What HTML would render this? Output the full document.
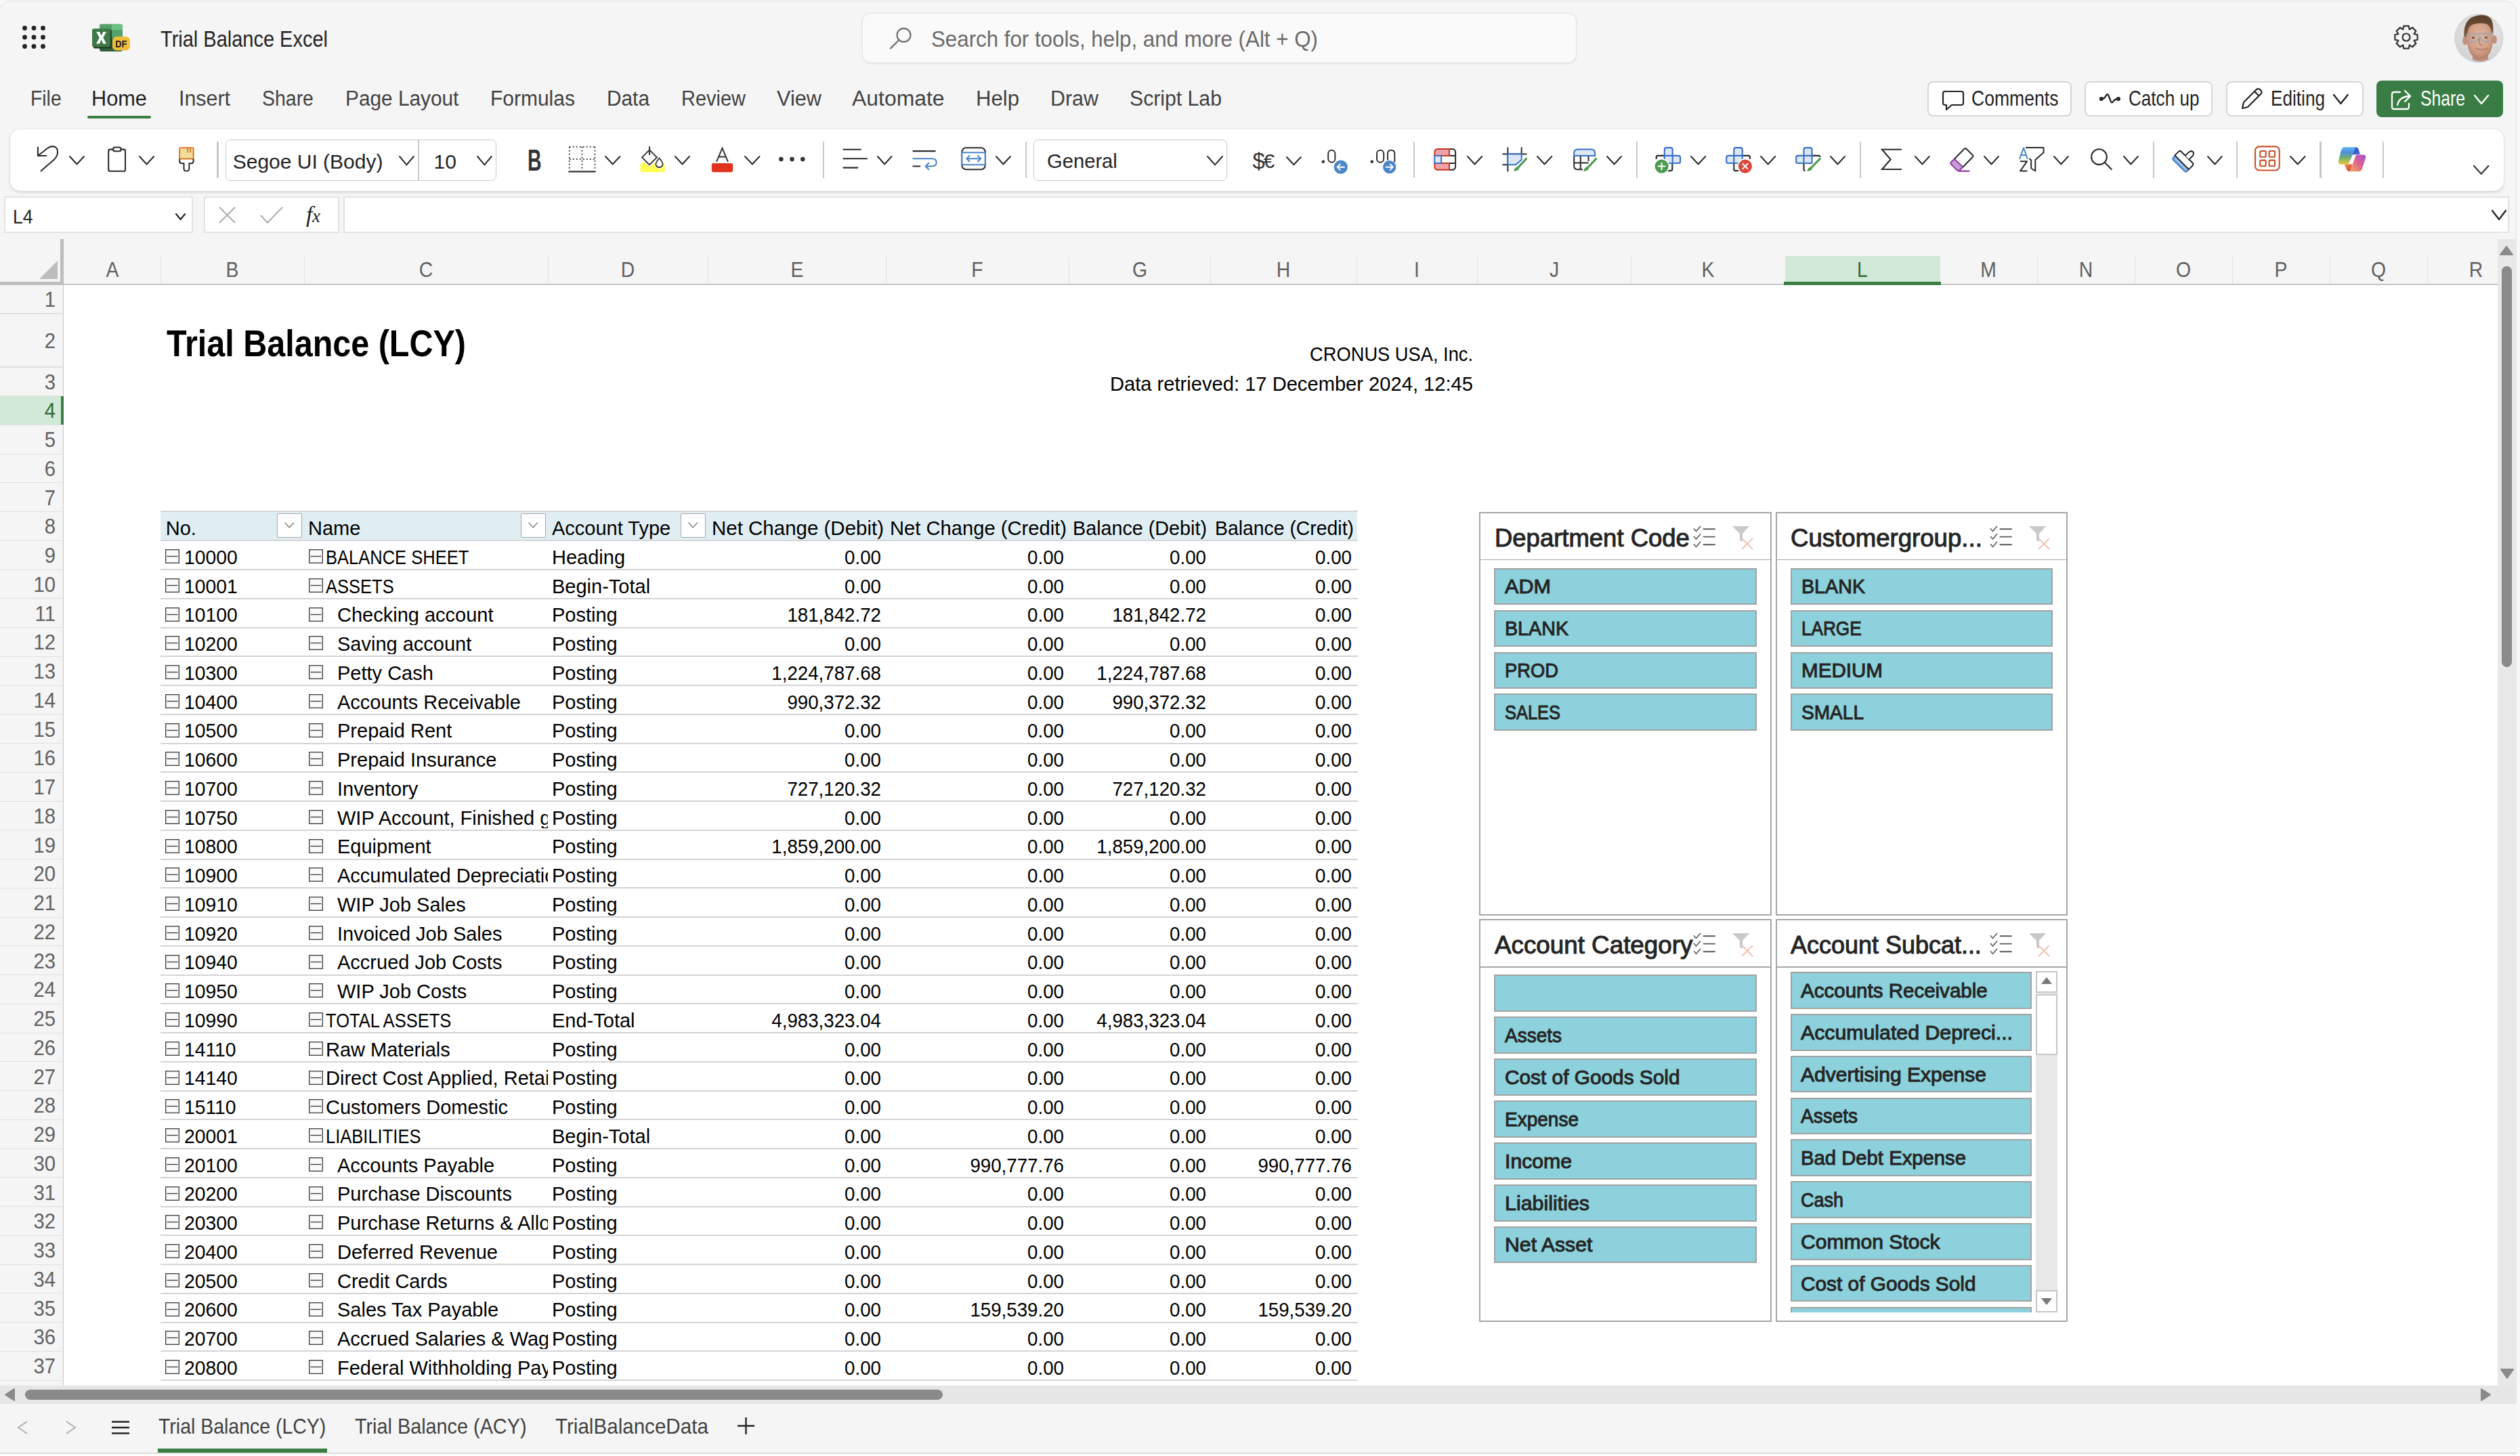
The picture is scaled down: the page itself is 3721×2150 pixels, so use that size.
<!DOCTYPE html><html><head><meta charset="utf-8"><style>
html,body{margin:0;padding:0;}
body{width:3721px;height:2150px;position:relative;overflow:hidden;background:#f5f5f5;font-family:"Liberation Sans",sans-serif;}
.t{position:absolute;white-space:nowrap;}
.r{position:absolute;}
svg.r{overflow:visible;}
</style></head><body>
<div class="r" style="left:0.00px;top:0.00px;width:3721.00px;height:2150.00px;background:#f8f8f8;"></div>
<div class="r" style="left:-2.50px;top:0.70px;width:3718.70px;height:2146.30px;background:#f5f5f5;border:1.5px solid #e2e2e2;border-radius:17px 17px 0 0;box-sizing:border-box;"></div>
<div class="r" style="left:0.00px;top:2147.00px;width:3721.00px;height:3.00px;background:#ffffff;"></div>
<svg class="r" style="left:33.00px;top:38.00px;" width="34" height="34" viewBox="0 0 34 34"><circle cx="3.5" cy="3.5" r="3.4" fill="#242424"/><circle cx="3.5" cy="17.0" r="3.4" fill="#242424"/><circle cx="3.5" cy="30.5" r="3.4" fill="#242424"/><circle cx="17.0" cy="3.5" r="3.4" fill="#242424"/><circle cx="17.0" cy="17.0" r="3.4" fill="#242424"/><circle cx="17.0" cy="30.5" r="3.4" fill="#242424"/><circle cx="30.5" cy="3.5" r="3.4" fill="#242424"/><circle cx="30.5" cy="17.0" r="3.4" fill="#242424"/><circle cx="30.5" cy="30.5" r="3.4" fill="#242424"/></svg>
<svg class="r" style="left:130.00px;top:30.00px;" width="70" height="52" viewBox="0 0 70 52"><g transform="translate(-130,-30)">
<path d="M147.1 38 Q147.1 35.7 149.4 35.7 H178.6 Q180.9 35.7 180.9 38 V73.6 Q180.9 75.9 178.6 75.9 H149.4 Q147.1 75.9 147.1 73.6 Z" fill="#2e5f3a"/>
<path d="M147.1 38 Q147.1 35.7 149.4 35.7 H164.8 V56.3 H147.1 Z" fill="#56a06a"/>
<path d="M164.8 35.7 H178.6 Q180.9 35.7 180.9 38 V44.8 H164.8 Z" fill="#6cc187"/>
<rect x="164.8" y="44.8" width="16.1" height="11.5" fill="#56a06a"/>
<rect x="137.5" y="43.5" width="27.3" height="27.9" rx="3" fill="#1c3a22"/>
<rect x="136" y="42.3" width="27" height="27" rx="3" fill="#3d7a47"/>
<path d="M142.2 47.1 H147 L149.6 52.7 L152.3 47.1 H157 L152.3 55.8 L157.1 64.5 H152.3 L149.6 58.8 L146.9 64.5 H142.1 L146.9 55.8 Z" fill="#ffffff"/>
<rect x="166" y="53.9" width="25.8" height="20.7" rx="6" fill="#f0bd38"/>
<text x="178.8" y="69.6" font-family="Liberation Sans" font-size="14.6" font-weight="700" fill="#1a1a28" text-anchor="middle" textLength="17" lengthAdjust="spacingAndGlyphs">DF</text>
</g></svg>
<div class="t" style="top:40.63px;font-size:33.52px;line-height:33.52px;color:#242424;left:237.00px;transform:scaleX(0.8647);transform-origin:0 0;">Trial Balance Excel</div>
<div class="r" style="left:1274.00px;top:20.00px;width:1053.00px;height:71.50px;background:#fafafa;border-radius:12px;box-shadow:0 0 0 1.5px #e6e6e6, 0 1.5px 3px rgba(0,0,0,0.10);"></div>
<svg class="r" style="left:1313.00px;top:40.00px;" width="36" height="34" viewBox="0 0 36 34"><circle cx="21.5" cy="11.8" r="10" fill="none" stroke="#707070" stroke-width="2.2"/><line x1="14.5" y1="19" x2="2" y2="31.5" stroke="#707070" stroke-width="2.4" stroke-linecap="round"/></svg>
<div class="t" style="top:40.86px;font-size:33.24px;line-height:33.24px;color:#6b6b6b;left:1375.00px;transform:scaleX(0.9408);transform-origin:0 0;">Search for tools, help, and more (Alt + Q)</div>
<svg class="r" style="left:3535.00px;top:37.00px;" width="36" height="36" viewBox="0 0 36 36"><g transform="translate(18,18)"><polygon points="16.59,-3.71 16.59,3.71 11.56,4.75 11.54,4.81 14.35,9.11 9.11,14.35 4.81,11.54 4.75,11.56 3.71,16.59 -3.71,16.59 -4.75,11.56 -4.81,11.54 -9.11,14.35 -14.35,9.11 -11.54,4.81 -11.56,4.75 -16.59,3.71 -16.59,-3.71 -11.56,-4.75 -11.54,-4.81 -14.35,-9.11 -9.11,-14.35 -4.81,-11.54 -4.75,-11.56 -3.71,-16.59 3.71,-16.59 4.75,-11.56 4.81,-11.54 9.11,-14.35 14.35,-9.11 11.54,-4.81 11.56,-4.75" fill="none" stroke="#333" stroke-width="2.2" stroke-linejoin="round"/><circle r="5.5" fill="none" stroke="#333" stroke-width="2.2"/></g></svg>
<svg class="r" style="left:3624.30px;top:19.80px;" width="72.6" height="72.6" viewBox="0 0 72.6 72.6">
<defs><clipPath id="av"><circle cx="36.3" cy="36.3" r="36.3"/></clipPath>
<radialGradient id="avbg" cx="0.55" cy="0.4" r="0.65"><stop offset="0" stop-color="#ececec"/><stop offset="1" stop-color="#d0d0d0"/></radialGradient>
<radialGradient id="skin" cx="0.5" cy="0.42" r="0.6"><stop offset="0" stop-color="#e3b8a2"/><stop offset="0.7" stop-color="#cf9a82"/><stop offset="1" stop-color="#b07a64"/></radialGradient>
<linearGradient id="hair" x1="0" y1="0" x2="0" y2="1"><stop offset="0" stop-color="#5a3c28"/><stop offset="1" stop-color="#7a5a44"/></linearGradient>
</defs>
<g clip-path="url(#av)">
<rect width="73" height="73" fill="url(#avbg)"/>
<path d="M20 66 Q38 74 58 64 L64 76 H14 Z" fill="#c9d3e2"/>
<path d="M27 58 Q38 70 50 58 L50 68 Q38 74 27 68 Z" fill="#c08e78"/>
<ellipse cx="15.8" cy="40" rx="3.6" ry="6.5" fill="#c48e78"/>
<ellipse cx="59.5" cy="38.5" rx="3.4" ry="6.2" fill="#c48e78"/>
<path d="M18 28 Q18 11 37 11 Q57 11 57.5 28 Q58.5 48 52 59 Q46 67.5 38 67.5 Q30 67.5 24.5 60 Q17.5 50 18 28 Z" fill="url(#skin)"/>
<path d="M14.5 34 Q13 14 25 6 Q36 0.5 47 3 Q56 6 57 16 Q58 22 57 29 L55.5 29 Q54 20 49 16 Q43 13.5 35 14.5 Q26 15 22 20 Q19.5 24 19 34 Z" fill="url(#hair)"/>
<path d="M19 30.5 L56.5 29.5 L56 33 Q55 41.5 47 41.5 Q39.5 41.5 38.5 34 L36.5 34 Q35.5 42 27.5 42 Q19.5 42 19 33 Z" fill="none" stroke="#a6a6a6" stroke-width="2.4" stroke-linejoin="round" opacity="0.9"/>
<ellipse cx="28" cy="35.8" rx="2.2" ry="1.3" fill="#4a4a50"/>
<ellipse cx="47" cy="35.5" rx="2.2" ry="1.3" fill="#4a4a50"/>
<path d="M37 37 Q36 44 38.5 46 Q40 46.5 41 45.5" fill="none" stroke="#a87262" stroke-width="1.3"/>
<path d="M31.5 51 Q40.5 57.5 50 51 Q41 55 31.5 51 Z" fill="#f2ead6" stroke="#b07064" stroke-width="1"/>
</g></svg>
<div class="t" style="top:129.92px;font-size:31.28px;line-height:31.28px;color:#424242;left:45.40px;transform:scaleX(0.9065);transform-origin:0 0;">File</div>
<div class="t" style="top:129.92px;font-size:31.28px;line-height:31.28px;color:#242424;left:135.00px;transform:scaleX(0.9826);transform-origin:0 0;">Home</div>
<div class="t" style="top:129.92px;font-size:31.28px;line-height:31.28px;color:#424242;left:264.00px;transform:scaleX(0.9713);transform-origin:0 0;">Insert</div>
<div class="t" style="top:129.92px;font-size:31.28px;line-height:31.28px;color:#424242;left:387.00px;transform:scaleX(0.9103);transform-origin:0 0;">Share</div>
<div class="t" style="top:129.92px;font-size:31.28px;line-height:31.28px;color:#424242;left:510.00px;transform:scaleX(0.9534);transform-origin:0 0;">Page Layout</div>
<div class="t" style="top:129.92px;font-size:31.28px;line-height:31.28px;color:#424242;left:724.00px;transform:scaleX(0.9587);transform-origin:0 0;">Formulas</div>
<div class="t" style="top:129.92px;font-size:31.28px;line-height:31.28px;color:#424242;left:896.00px;transform:scaleX(0.9533);transform-origin:0 0;">Data</div>
<div class="t" style="top:129.92px;font-size:31.28px;line-height:31.28px;color:#424242;left:1005.70px;transform:scaleX(0.9261);transform-origin:0 0;">Review</div>
<div class="t" style="top:129.92px;font-size:31.28px;line-height:31.28px;color:#424242;left:1146.70px;transform:scaleX(0.9814);transform-origin:0 0;">View</div>
<div class="t" style="top:129.92px;font-size:31.28px;line-height:31.28px;color:#424242;left:1258.00px;transform:scaleX(1.0208);transform-origin:0 0;">Automate</div>
<div class="t" style="top:129.92px;font-size:31.28px;line-height:31.28px;color:#424242;left:1441.00px;transform:scaleX(0.9946);transform-origin:0 0;">Help</div>
<div class="t" style="top:129.92px;font-size:31.28px;line-height:31.28px;color:#424242;left:1551.00px;transform:scaleX(0.9725);transform-origin:0 0;">Draw</div>
<div class="t" style="top:129.92px;font-size:31.28px;line-height:31.28px;color:#424242;left:1668.00px;transform:scaleX(0.9655);transform-origin:0 0;">Script Lab</div>
<div class="r" style="left:129.00px;top:170.80px;width:94.00px;height:4.40px;background:#3a7d44;border-radius:3px;"></div>
<div class="r" style="left:2845.60px;top:119.50px;width:213.40px;height:52.50px;background:#ffffff;border:2px solid #d6d6d6;border-radius:8px;box-sizing:border-box;"></div>
<div class="r" style="left:3077.80px;top:119.50px;width:189.70px;height:52.50px;background:#ffffff;border:2px solid #d6d6d6;border-radius:8px;box-sizing:border-box;"></div>
<div class="r" style="left:3287.00px;top:119.50px;width:203.00px;height:52.50px;background:#ffffff;border:2px solid #d6d6d6;border-radius:8px;box-sizing:border-box;"></div>
<div class="r" style="left:3508.70px;top:119.00px;width:187.30px;height:54.00px;background:#3a7d44;border-radius:8px;"></div>
<div class="t" style="top:130.99px;font-size:30.73px;line-height:30.73px;color:#242424;left:2911.00px;transform:scaleX(0.8650);transform-origin:0 0;">Comments</div>
<div class="t" style="top:130.99px;font-size:30.73px;line-height:30.73px;color:#242424;left:3143.00px;transform:scaleX(0.8497);transform-origin:0 0;">Catch up</div>
<div class="t" style="top:130.99px;font-size:30.73px;line-height:30.73px;color:#242424;left:3352.50px;transform:scaleX(0.8515);transform-origin:0 0;">Editing</div>
<div class="t" style="top:130.99px;font-size:30.73px;line-height:30.73px;color:#ffffff;left:3574.00px;transform:scaleX(0.8049);transform-origin:0 0;">Share</div>
<svg class="r" style="left:2867.00px;top:133.00px;" width="34" height="32" viewBox="0 0 34 32"><path d="M5 2 H29 Q32 2 32 5 V19 Q32 22 29 22 H15 L7 29 V22 H5 Q2 22 2 19 V5 Q2 2 5 2 Z" fill="none" stroke="#242424" stroke-width="2.2" stroke-linejoin="round"/></svg>
<svg class="r" style="left:3090.00px;top:130.00px;" width="50" height="30" viewBox="0 0 50 30"><g transform="translate(-3090,-130)"><path d="M3103 146 Q3107.5 146 3109.5 141.5 Q3111.6 137 3113.6 141.5 L3116.5 149 Q3118.4 153.5 3120.6 149.5 Q3123 145.8 3128 146" fill="none" stroke="#242424" stroke-width="2.3" stroke-linecap="round"/><circle cx="3102.9" cy="146" r="3" fill="#242424"/><circle cx="3128" cy="146" r="3" fill="#242424"/></g></svg>
<svg class="r" style="left:3307.00px;top:129.00px;" width="36" height="34" viewBox="0 0 36 34"><path d="M4 31 L6 22 L25 3 Q28 1 31 4 Q34 7 31 10 L12 29 Z M22 6 L28 12" fill="none" stroke="#242424" stroke-width="2.2" stroke-linejoin="round"/></svg>
<svg class="r" style="left:3443.00px;top:137.00px;" width="26.699999999999818" height="19" viewBox="0 0 26.699999999999818 19"><polyline points="3,3 13.3,16.0 23.7,3" fill="none" stroke="#242424" stroke-width="2.4" stroke-linecap="round" stroke-linejoin="round"/></svg>
<svg class="r" style="left:3529.00px;top:131.00px;" width="32" height="32" viewBox="0 0 32 32"><path d="M22 3 L30 11 L22 19 M30 11 Q14 11 11 24" fill="none" stroke="#fff" stroke-width="2.3" stroke-linejoin="round" stroke-linecap="round"/><path d="M15 5 H6 Q3 5 3 8 V27 Q3 30 6 30 H25 Q28 30 28 27 V22" fill="none" stroke="#fff" stroke-width="2.3" stroke-linecap="round"/></svg>
<svg class="r" style="left:3651.00px;top:138.00px;" width="26" height="18" viewBox="0 0 26 18"><polyline points="3,3 13.0,15.0 23.0,3" fill="none" stroke="#ffffff" stroke-width="2.4" stroke-linecap="round" stroke-linejoin="round"/></svg>
<div class="r" style="left:15.00px;top:191.00px;width:3682.00px;height:90.50px;background:#ffffff;border-radius:15px;box-shadow:0 1.5px 4px rgba(0,0,0,0.14), 0 0 1px rgba(0,0,0,0.10);"></div>
<svg class="r" style="left:50.00px;top:213.00px;" width="40" height="44" viewBox="0 0 40 44"><g transform="translate(-50,-213)" fill="none" stroke="#2b2b2b" stroke-width="2.1" stroke-linecap="round" stroke-linejoin="round"><path d="M56 230 L70 219 Q76 214.5 81.5 217 Q86.5 220.5 84.5 228.5 Q83.5 232 80 235.5 L60.5 252.5"/><path d="M56 217.5 V230 H68.3"/></g></svg>
<svg class="r" style="left:100.00px;top:227.80px;" width="27" height="17.5" viewBox="0 0 27 17.5"><polyline points="3,3 13.5,14.5 24.0,3" fill="none" stroke="#2b2b2b" stroke-width="2.0" stroke-linecap="round" stroke-linejoin="round"/></svg>
<svg class="r" style="left:155.00px;top:213.00px;" width="36" height="44" viewBox="0 0 36 44"><g transform="translate(-155,-213)" fill="none" stroke="#2b2b2b" stroke-width="2.1" stroke-linejoin="round"><rect x="160.2" y="220.6" width="24.8" height="32.2" rx="2.3"/><rect x="167" y="217.5" width="11.6" height="5.8" rx="2.9" fill="#fff"/></g></svg>
<svg class="r" style="left:202.70px;top:227.80px;" width="27.200000000000017" height="17.5" viewBox="0 0 27.200000000000017 17.5"><polyline points="3,3 13.6,14.5 24.2,3" fill="none" stroke="#2b2b2b" stroke-width="2.0" stroke-linecap="round" stroke-linejoin="round"/></svg>
<svg class="r" style="left:260.00px;top:213.00px;" width="32" height="44" viewBox="0 0 32 44"><g transform="translate(-260,-213)" stroke-linejoin="round"><rect x="265.2" y="218.3" width="20.4" height="16.3" rx="1.5" fill="#f3de9b" stroke="#d9782a" stroke-width="2"/><path d="M276.9 218.5 V225.5 M281 218.5 V225.5" stroke="#d9782a" stroke-width="1.8"/><path d="M265.2 234.6 V238 Q265.2 241.3 268.5 241.3 H271.5 V249 Q271.5 252.6 275.4 252.6 Q279.3 252.6 279.3 249 V241.3 H282.3 Q285.6 241.3 285.6 238 V234.6" fill="none" stroke="#2b2b2b" stroke-width="2"/></g></svg>
<div class="r" style="left:320.40px;top:209.20px;width:2.20px;height:53.80px;background:#c8c8c8;"></div>
<div class="r" style="left:332.50px;top:205.50px;width:400.80px;height:61.50px;background:#ffffff;border:1.6px solid #cbcbcb;border-radius:7px;box-sizing:border-box;"></div>
<div class="r" style="left:617.00px;top:206.00px;width:1.60px;height:60.50px;background:#cbcbcb;"></div>
<div class="t" style="top:223.80px;font-size:30.00px;line-height:30.00px;color:#242424;left:343.70px;">Segoe UI (Body)</div>
<svg class="r" style="left:587.00px;top:228.30px;" width="26.799999999999955" height="18.399999999999977" viewBox="0 0 26.799999999999955 18.399999999999977"><polyline points="3,3 13.4,15.4 23.8,3" fill="none" stroke="#2b2b2b" stroke-width="2.0" stroke-linecap="round" stroke-linejoin="round"/></svg>
<div class="t" style="top:223.80px;font-size:30.00px;line-height:30.00px;color:#242424;left:640.50px;">10</div>
<svg class="r" style="left:702.00px;top:228.30px;" width="26.799999999999955" height="18.399999999999977" viewBox="0 0 26.799999999999955 18.399999999999977"><polyline points="3,3 13.4,15.4 23.8,3" fill="none" stroke="#2b2b2b" stroke-width="2.0" stroke-linecap="round" stroke-linejoin="round"/></svg>
<div class="t" style="top:214.74px;font-size:44.13px;line-height:44.13px;color:#333333;font-weight:700;left:779.20px;transform:scaleX(0.6463);transform-origin:0 0;">B</div>
<svg class="r" style="left:836.00px;top:212.00px;" width="48" height="46" viewBox="0 0 48 46"><g transform="translate(-836,-212)"><line x1="840.8" y1="216.8" x2="878.6" y2="216.8" stroke="#444" stroke-width="1.9" stroke-dasharray="1.9 3.1"/><line x1="840.8" y1="235" x2="878.6" y2="235" stroke="#444" stroke-width="1.9" stroke-dasharray="1.9 3.1"/><line x1="840.8" y1="216.8" x2="840.8" y2="250" stroke="#444" stroke-width="1.9" stroke-dasharray="1.9 3.1"/><line x1="859.5" y1="216.8" x2="859.5" y2="250" stroke="#444" stroke-width="1.9" stroke-dasharray="1.9 3.1"/><line x1="878.4" y1="216.8" x2="878.4" y2="250" stroke="#444" stroke-width="1.9" stroke-dasharray="1.9 3.1"/><line x1="840.3" y1="253.4" x2="878.8" y2="253.4" stroke="#333" stroke-width="2.2" stroke-linecap="round"/></g></svg>
<svg class="r" style="left:890.80px;top:227.80px;" width="27.40000000000009" height="17.5" viewBox="0 0 27.40000000000009 17.5"><polyline points="3,3 13.7,14.5 24.4,3" fill="none" stroke="#2b2b2b" stroke-width="2.0" stroke-linecap="round" stroke-linejoin="round"/></svg>
<svg class="r" style="left:940.00px;top:212.00px;" width="46" height="46" viewBox="0 0 46 46"><g transform="translate(-940,-212)">
<path d="M945.5 244 Q945.5 240.6 949 240.6 H978 Q981.8 240.6 981.8 244 V251 Q981.8 254.3 978 254.3 H949 Q945.5 254.3 945.5 251 Z" fill="#ffff52"/>
<path d="M959 221.4 L970 232.4 L959 243.4 L948 232.4 Z" fill="#fff" stroke="#fff" stroke-width="5" stroke-linejoin="round"/>
<path d="M959 221.4 L970 232.4 L959 243.4 L948 232.4 Z" fill="none" stroke="#333" stroke-width="2" stroke-linejoin="round"/>
<line x1="959" y1="216.3" x2="959" y2="229" stroke="#333" stroke-width="2"/>
<path d="M973.5 233.5 Q967.5 240.5 968.5 243.5 Q969.5 247 973.5 247 Q977.5 247 978.5 243.5 Q979.5 240.5 973.5 233.5 Z" fill="#fff" stroke="#fff" stroke-width="4"/>
<path d="M973.5 233.5 Q967.5 240.5 968.5 243.5 Q969.5 247 973.5 247 Q977.5 247 978.5 243.5 Q979.5 240.5 973.5 233.5 Z" fill="none" stroke="#333" stroke-width="1.9"/>
</g></svg>
<svg class="r" style="left:993.80px;top:227.80px;" width="27.0" height="17.5" viewBox="0 0 27.0 17.5"><polyline points="3,3 13.5,14.5 24.0,3" fill="none" stroke="#2b2b2b" stroke-width="2.0" stroke-linecap="round" stroke-linejoin="round"/></svg>
<svg class="r" style="left:1046.00px;top:214.00px;" width="40" height="44" viewBox="0 0 40 44"><g transform="translate(-1046,-214)">
<path d="M1058 238.8 L1066.5 218.8 L1075 238.8 M1061 231.5 H1072" fill="none" stroke="#333" stroke-width="2"/>
<rect x="1050.8" y="241.1" width="31.4" height="13.2" rx="3" fill="#e0341f"/></g></svg>
<svg class="r" style="left:1096.50px;top:227.80px;" width="27.5" height="17.5" viewBox="0 0 27.5 17.5"><polyline points="3,3 13.8,14.5 24.5,3" fill="none" stroke="#2b2b2b" stroke-width="2.0" stroke-linecap="round" stroke-linejoin="round"/></svg>
<svg class="r" style="left:1148.00px;top:229.00px;" width="42" height="12" viewBox="0 0 42 12"><g transform="translate(-1148,-229)" fill="#333"><circle cx="1153.4" cy="235.1" r="3.3"/><circle cx="1169.5" cy="235.1" r="3.3"/><circle cx="1185.3" cy="235.1" r="3.3"/></g></svg>
<div class="r" style="left:1214.70px;top:209.20px;width:2.20px;height:53.80px;background:#c8c8c8;"></div>
<svg class="r" style="left:1240.00px;top:215.00px;" width="46" height="38" viewBox="0 0 46 38"><g transform="translate(-1240,-215)" stroke="#2b2b2b" stroke-width="2.1" stroke-linecap="round"><line x1="1245.4" y1="220.7" x2="1270.8" y2="220.7"/><line x1="1245.4" y1="234.2" x2="1280" y2="234.2"/><line x1="1245.4" y1="247.6" x2="1266.4" y2="247.6"/></g></svg>
<svg class="r" style="left:1293.20px;top:227.80px;" width="26.5" height="17.5" viewBox="0 0 26.5 17.5"><polyline points="3,3 13.2,14.5 23.5,3" fill="none" stroke="#2b2b2b" stroke-width="2.0" stroke-linecap="round" stroke-linejoin="round"/></svg>
<svg class="r" style="left:1343.00px;top:215.00px;" width="46" height="40" viewBox="0 0 46 40"><g transform="translate(-1343,-215)" fill="none" stroke-width="2.1" stroke-linecap="round" stroke-linejoin="round">
<line x1="1348.4" y1="223.1" x2="1380.7" y2="223.1" stroke="#2b2b2b"/>
<line x1="1348.4" y1="245.5" x2="1358.3" y2="245.5" stroke="#2b2b2b"/>
<path d="M1348.4 234.2 H1376 Q1382.7 234.2 1382.7 239.8 Q1382.7 245.5 1376 245.5 H1367 M1371.4 240.8 L1366.7 245.5 L1371.4 250.2" stroke="#4a86c8"/></g></svg>
<svg class="r" style="left:1415.00px;top:213.00px;" width="46" height="42" viewBox="0 0 46 42"><g transform="translate(-1415,-213)" fill="none" stroke-width="2.1" stroke-linecap="round" stroke-linejoin="round">
<rect x="1420.4" y="218.3" width="34.3" height="31.9" rx="6" stroke="#2b2b2b"/>
<rect x="1420.4" y="225.3" width="34.3" height="18" stroke="#4a86c8" fill="#fff"/>
<path d="M1427.5 234.2 H1448 M1431.5 230 L1427.3 234.2 L1431.5 238.4 M1444 230 L1448.2 234.2 L1444 238.4" stroke="#4a86c8"/></g></svg>
<svg class="r" style="left:1467.80px;top:227.80px;" width="26.90000000000009" height="17.5" viewBox="0 0 26.90000000000009 17.5"><polyline points="3,3 13.5,14.5 23.9,3" fill="none" stroke="#2b2b2b" stroke-width="2.0" stroke-linecap="round" stroke-linejoin="round"/></svg>
<div class="r" style="left:1513.90px;top:209.20px;width:2.20px;height:53.80px;background:#c8c8c8;"></div>
<div class="r" style="left:1526.00px;top:205.70px;width:286.00px;height:61.00px;background:#ffffff;border:1.6px solid #cbcbcb;border-radius:7px;box-sizing:border-box;"></div>
<div class="t" style="top:224.48px;font-size:29.20px;line-height:29.20px;color:#242424;left:1546.00px;">General</div>
<svg class="r" style="left:1780.00px;top:228.30px;" width="28" height="18.399999999999977" viewBox="0 0 28 18.399999999999977"><polyline points="3,3 14.0,15.4 25.0,3" fill="none" stroke="#2b2b2b" stroke-width="2.0" stroke-linecap="round" stroke-linejoin="round"/></svg>
<div class="t" style="top:220.57px;font-size:33.00px;line-height:33.00px;color:#333333;left:1849.50px;">$</div>
<div class="t" style="top:223.10px;font-size:30.00px;line-height:30.00px;color:#333333;left:1865.50px;">€</div>
<svg class="r" style="left:1897.20px;top:228.80px;" width="26.799999999999955" height="17.299999999999983" viewBox="0 0 26.799999999999955 17.299999999999983"><polyline points="3,3 13.4,14.3 23.8,3" fill="none" stroke="#2b2b2b" stroke-width="2.0" stroke-linecap="round" stroke-linejoin="round"/></svg>
<svg class="r" style="left:1948.00px;top:218.00px;" width="44" height="40" viewBox="0 0 44 40"><g transform="translate(-1948,-218)">
<circle cx="1953.8" cy="238.7" r="2.3" fill="#333"/>
<rect x="1961.2" y="221.8" width="10.2" height="18" rx="5.1" fill="none" stroke="#333" stroke-width="2"/>
<circle cx="1979.8" cy="246.7" r="10.1" fill="#4a86c8"/>
<path d="M1985 246.7 H1974.8 M1978.8 242.5 L1974.6 246.7 L1978.8 250.9" fill="none" stroke="#fff" stroke-width="1.9" stroke-linecap="round" stroke-linejoin="round"/></g></svg>
<svg class="r" style="left:2020.00px;top:218.00px;" width="46" height="40" viewBox="0 0 46 40"><g transform="translate(-2020,-218)">
<circle cx="2025.8" cy="238.7" r="2.3" fill="#333"/>
<rect x="2033" y="221.8" width="10.2" height="18" rx="5.1" fill="none" stroke="#333" stroke-width="2"/>
<path d="M2049 240 V227 Q2049 221.8 2054 221.8 Q2059.3 221.8 2059.3 227 V240" fill="none" stroke="#333" stroke-width="2"/>
<circle cx="2051.7" cy="246.7" r="10.1" fill="#4a86c8" stroke="#fff" stroke-width="1"/>
<path d="M2046.5 246.7 H2056.7 M2052.7 242.5 L2056.9 246.7 L2052.7 250.9" fill="none" stroke="#fff" stroke-width="1.9" stroke-linecap="round" stroke-linejoin="round"/></g></svg>
<div class="r" style="left:2086.60px;top:209.20px;width:2.20px;height:53.80px;background:#c8c8c8;"></div>
<svg class="r" style="left:2114.00px;top:216.00px;" width="40" height="40" viewBox="0 0 40 40"><g transform="translate(-2114,-216)" stroke-width="2">
<path d="M2140 220 H2144 Q2149.1 220 2149.1 225 V245.8 Q2149.1 250.8 2144 250.8 H2140" fill="none" stroke="#2b2b2b"/>
<line x1="2140" y1="229.9" x2="2149" y2="229.9" stroke="#2b2b2b"/><line x1="2140" y1="241" x2="2149" y2="241" stroke="#2b2b2b"/>
<path d="M2140 220 H2123.3 Q2118.3 220 2118.3 225 V229.9 H2140 Z" fill="#eea3a8" stroke="#c8361f"/>
<path d="M2140 250.8 H2123.3 Q2118.3 250.8 2118.3 245.8 V241 H2140 Z" fill="#eea3a8" stroke="#c8361f"/>
<rect x="2118.3" y="229.9" width="9.9" height="11.1" fill="#dce8f6" stroke="#3a6fc4"/>
</g></svg>
<svg class="r" style="left:2163.80px;top:227.80px;" width="27.199999999999818" height="17.5" viewBox="0 0 27.199999999999818 17.5"><polyline points="3,3 13.6,14.5 24.2,3" fill="none" stroke="#2b2b2b" stroke-width="2.0" stroke-linecap="round" stroke-linejoin="round"/></svg>
<svg class="r" style="left:2214.00px;top:213.00px;" width="46" height="44" viewBox="0 0 46 44"><g transform="translate(-2214,-213)" stroke-width="2">
<path d="M2218.5 227.5 H2254.5 M2218.5 243.2 H2226 M2226.4 217.4 V253.5 M2246.7 217.4 V227" fill="none" stroke="#2b2b2b"/>
<path d="M2226.4 227.5 H2246.7 V236 L2238 243.2 H2226.4 Z" fill="#dce8f6" stroke="#3a6fc4"/>
<path d="M2253.5 234.5 L2241 248" stroke="#fff" stroke-width="6"/>
<path d="M2253.5 234.5 L2242 247" stroke="#4e9a51" stroke-width="3.2" stroke-linecap="round"/>
<path d="M2241.5 246 Q2236 247 2235.5 252.8 Q2241 253 2243 249 Z" fill="#4e9a51"/>
</g></svg>
<svg class="r" style="left:2266.90px;top:227.80px;" width="27.299999999999727" height="17.5" viewBox="0 0 27.299999999999727 17.5"><polyline points="3,3 13.6,14.5 24.3,3" fill="none" stroke="#2b2b2b" stroke-width="2.0" stroke-linecap="round" stroke-linejoin="round"/></svg>
<svg class="r" style="left:2320.00px;top:215.00px;" width="42" height="42" viewBox="0 0 42 42"><g transform="translate(-2320,-215)" stroke-width="2">
<path d="M2324.2 229.9 V245 Q2324.2 250.2 2329.4 250.2 H2337 M2333.8 229.9 V250 M2324.2 240.4 H2345.5 M2345.5 229.9 V238" fill="none" stroke="#2b2b2b"/>
<path d="M2324.2 229.9 V226 Q2324.2 220.5 2330 220.5 H2349.5 Q2355.1 220.5 2355.1 226 V229.9 Z" fill="#dce8f6" stroke="#3a6fc4"/>
<path d="M2356.7 234.5 L2344 248" stroke="#fff" stroke-width="6"/>
<path d="M2356.7 234.5 L2345 247" stroke="#4e9a51" stroke-width="3.2" stroke-linecap="round"/>
<path d="M2344.5 246 Q2339 247 2338.3 252.8 Q2344 253 2346 249 Z" fill="#4e9a51"/>
</g></svg>
<svg class="r" style="left:2370.00px;top:227.80px;" width="27" height="17.5" viewBox="0 0 27 17.5"><polyline points="3,3 13.5,14.5 24.0,3" fill="none" stroke="#2b2b2b" stroke-width="2.0" stroke-linecap="round" stroke-linejoin="round"/></svg>
<div class="r" style="left:2415.80px;top:209.20px;width:2.20px;height:53.80px;background:#c8c8c8;"></div>
<svg class="r" style="left:2440.00px;top:214.00px;" width="46" height="44" viewBox="0 0 46 44"><g transform="translate(-2440,-214)" stroke-width="2.1" stroke-linejoin="round">
<path d="M2445.7 235.1 V232 Q2445.7 229.9 2448 229.9 H2457.8 M2469.3 241 V250 Q2469.3 252.1 2467 252.1 H2455" fill="none" stroke="#2b2b2b"/>
<path d="M2457.8 229.9 V221 Q2457.8 218.1 2460.6 218.1 H2467 Q2469.7 218.1 2469.7 221 V229.9 H2478.3 Q2481.1 229.9 2481.1 232.7 V238.2 Q2481.1 241 2478.3 241 H2457.8 Z" fill="#dce8f6" stroke="#3a6fc4"/>
<path d="M2469.7 229.9 V241 M2457.8 229.9 H2469.7" fill="none" stroke="#3a6fc4"/>
<circle cx="2453.6" cy="245.6" r="10.8" fill="#4e9a51" stroke="#fff" stroke-width="1.5"/>
<path d="M2453.6 240 V251.2 M2448 245.6 H2459.2" stroke="#fff" stroke-width="2"/>
</g></svg>
<svg class="r" style="left:2493.80px;top:227.80px;" width="27.199999999999818" height="17.5" viewBox="0 0 27.199999999999818 17.5"><polyline points="3,3 13.6,14.5 24.2,3" fill="none" stroke="#2b2b2b" stroke-width="2.0" stroke-linecap="round" stroke-linejoin="round"/></svg>
<svg class="r" style="left:2544.00px;top:214.00px;" width="46" height="44" viewBox="0 0 46 44"><g transform="translate(-2544,-214)" stroke-width="2.1" stroke-linejoin="round">
<path d="M2572.7 229.9 H2581.5 Q2583.9 229.9 2583.9 232 V235 M2560.3 241 V250 Q2560.3 252.1 2562.5 252.1 H2567" fill="none" stroke="#2b2b2b"/>
<path d="M2560.3 229.9 V221 Q2560.3 218.1 2563 218.1 H2570 Q2572.7 218.1 2572.7 221 V241 H2552 Q2549.2 241 2549.2 238.2 V232.7 Q2549.2 229.9 2552 229.9 Z" fill="#dce8f6" stroke="#3a6fc4"/>
<path d="M2560.3 229.9 V241 M2560.3 229.9 H2572.7" fill="none" stroke="#3a6fc4"/>
<circle cx="2576.9" cy="245.6" r="10.8" fill="#d9483b" stroke="#fff" stroke-width="1.5"/>
<path d="M2572.6 241.3 L2581.2 249.9 M2581.2 241.3 L2572.6 249.9" stroke="#fff" stroke-width="2"/>
</g></svg>
<svg class="r" style="left:2596.90px;top:227.80px;" width="27.299999999999727" height="17.5" viewBox="0 0 27.299999999999727 17.5"><polyline points="3,3 13.6,14.5 24.3,3" fill="none" stroke="#2b2b2b" stroke-width="2.0" stroke-linecap="round" stroke-linejoin="round"/></svg>
<svg class="r" style="left:2648.00px;top:214.00px;" width="46" height="44" viewBox="0 0 46 44"><g transform="translate(-2648,-214)" stroke-width="2.1" stroke-linejoin="round">
<path d="M2675.5 229.9 H2685 Q2687.3 229.9 2687.3 232 M2663.5 241 V250 Q2663.5 252.1 2665.5 252.1" fill="none" stroke="#2b2b2b"/>
<path d="M2663.5 229.9 V221 Q2663.5 218.1 2666.3 218.1 H2672.7 Q2675.5 218.1 2675.5 221 V241 H2655 Q2652.2 241 2652.2 238.2 V232.7 Q2652.2 229.9 2655 229.9 Z" fill="#dce8f6" stroke="#3a6fc4"/>
<path d="M2663.5 229.9 V241 M2663.5 229.9 H2675.5" fill="none" stroke="#3a6fc4"/>
<path d="M2687.3 234.5 L2674 248" stroke="#fff" stroke-width="6"/>
<path d="M2687.3 234.5 L2675 247" stroke="#4e9a51" stroke-width="3.2" stroke-linecap="round"/>
<path d="M2675.5 246 Q2669 247 2668.3 252.8 Q2674 253 2676 249 Z" fill="#4e9a51"/>
</g></svg>
<svg class="r" style="left:2700.00px;top:227.80px;" width="27" height="17.5" viewBox="0 0 27 17.5"><polyline points="3,3 13.5,14.5 24.0,3" fill="none" stroke="#2b2b2b" stroke-width="2.0" stroke-linecap="round" stroke-linejoin="round"/></svg>
<div class="r" style="left:2745.80px;top:209.20px;width:2.20px;height:53.80px;background:#c8c8c8;"></div>
<svg class="r" style="left:2774.00px;top:216.00px;" width="38" height="38" viewBox="0 0 38 38"><g transform="translate(-2774,-216)"><path d="M2807.2 220.8 H2779 L2791.7 235.5 L2779 250 H2807.2" fill="none" stroke="#2b2b2b" stroke-width="2.1" stroke-linejoin="miter" stroke-linecap="round"/></g></svg>
<svg class="r" style="left:2824.50px;top:227.80px;" width="26.800000000000182" height="17.5" viewBox="0 0 26.800000000000182 17.5"><polyline points="3,3 13.4,14.5 23.8,3" fill="none" stroke="#2b2b2b" stroke-width="2.0" stroke-linecap="round" stroke-linejoin="round"/></svg>
<svg class="r" style="left:2874.00px;top:213.00px;" width="46" height="44" viewBox="0 0 46 44"><g transform="translate(-2874,-213)" stroke-width="2" stroke-linejoin="round">
<path d="M2885.8 234.7 L2898.3 246.7 L2893.5 251.5 Q2891.7 253 2890 251.5 L2881 242.5 Q2879.5 240.8 2881 239.3 Z" fill="#c99ad8" stroke="#8e3ea0"/>
<path d="M2885.8 234.7 L2900.5 219.8 Q2902 218.3 2903.5 219.8 L2912.7 229 Q2914.2 230.5 2912.7 232 L2898.3 246.7" fill="none" stroke="#2b2b2b"/>
<path d="M2892 252.6 H2907.5" stroke="#8e3ea0" stroke-width="2.1" stroke-linecap="round"/>
</g></svg>
<svg class="r" style="left:2927.30px;top:227.80px;" width="27.0" height="17.5" viewBox="0 0 27.0 17.5"><polyline points="3,3 13.5,14.5 24.0,3" fill="none" stroke="#2b2b2b" stroke-width="2.0" stroke-linecap="round" stroke-linejoin="round"/></svg>
<svg class="r" style="left:2977.00px;top:213.00px;" width="46" height="44" viewBox="0 0 46 44"><g transform="translate(-2977,-213)" fill="none" stroke-width="2" stroke-linejoin="round">
<path d="M2982 235 L2988 218.3 L2994 235 M2984 229 H2992" stroke="#4a86c8"/>
<path d="M2983 238.3 H2993 L2983 252.5 H2993.5" stroke="#2b2b2b"/>
<path d="M2991 218 H3017.5 V225.3 L3005.3 236 V252.5 L2999.2 248.5 V236.5 L2996.5 234" stroke="#2b2b2b"/>
</g></svg>
<svg class="r" style="left:3030.30px;top:227.80px;" width="26.899999999999636" height="17.5" viewBox="0 0 26.899999999999636 17.5"><polyline points="3,3 13.4,14.5 23.9,3" fill="none" stroke="#2b2b2b" stroke-width="2.0" stroke-linecap="round" stroke-linejoin="round"/></svg>
<svg class="r" style="left:3082.00px;top:214.00px;" width="42" height="42" viewBox="0 0 42 42"><g transform="translate(-3082,-214)" fill="none" stroke="#2b2b2b" stroke-width="2.1" stroke-linecap="round"><circle cx="3099.5" cy="231.7" r="11.4"/><line x1="3107.8" y1="240" x2="3117.8" y2="250"/></g></svg>
<svg class="r" style="left:3133.30px;top:227.80px;" width="26.899999999999636" height="17.5" viewBox="0 0 26.899999999999636 17.5"><polyline points="3,3 13.4,14.5 23.9,3" fill="none" stroke="#2b2b2b" stroke-width="2.0" stroke-linecap="round" stroke-linejoin="round"/></svg>
<div class="r" style="left:3178.50px;top:209.20px;width:2.20px;height:53.80px;background:#c8c8c8;"></div>
<svg class="r" style="left:3200.00px;top:210.00px;" width="50" height="50" viewBox="0 0 50 50"><g transform="translate(11.3,19.4) rotate(45)" stroke-width="2" stroke-linejoin="round">
<rect x="0.8" y="0" width="28.5" height="6.2" rx="2.6" fill="#94bde9" stroke="#3a6fc4"/>
<path d="M0 0 V-7.5 Q0 -10.7 3 -10.7 H26.3 Q29.3 -10.7 29.3 -7.5 V0 Z" fill="#ffffff" stroke="#2b2b2b"/>
<path d="M11.2 -10.7 V-16.5 Q11.2 -22.5 15.2 -22.5 Q19.2 -22.5 19.2 -16.5 V-10.7" fill="#ffffff" stroke="#2b2b2b"/>
</g></svg>
<svg class="r" style="left:3256.60px;top:227.80px;" width="26.800000000000182" height="17.5" viewBox="0 0 26.800000000000182 17.5"><polyline points="3,3 13.4,14.5 23.8,3" fill="none" stroke="#2b2b2b" stroke-width="2.0" stroke-linecap="round" stroke-linejoin="round"/></svg>
<div class="r" style="left:3302.20px;top:209.20px;width:2.20px;height:53.80px;background:#c8c8c8;"></div>
<svg class="r" style="left:3325.00px;top:211.00px;" width="46" height="46" viewBox="0 0 46 46"><g transform="translate(-3325,-211)" fill="none" stroke="#c9502a" stroke-width="2.1">
<rect x="3330" y="216.4" width="35.7" height="35.1" rx="6"/>
<rect x="3337.2" y="223" width="8.5" height="8.7" rx="1.5"/><rect x="3350.6" y="223" width="8.5" height="8.7" rx="1.5"/>
<rect x="3337.2" y="236.6" width="8.5" height="8.7" rx="1.5"/><rect x="3350.6" y="236.6" width="8.5" height="8.7" rx="1.5"/>
</g></svg>
<svg class="r" style="left:3379.00px;top:227.80px;" width="27.59999999999991" height="17.5" viewBox="0 0 27.59999999999991 17.5"><polyline points="3,3 13.8,14.5 24.6,3" fill="none" stroke="#2b2b2b" stroke-width="2.0" stroke-linecap="round" stroke-linejoin="round"/></svg>
<div class="r" style="left:3425.40px;top:209.20px;width:2.20px;height:53.80px;background:#c8c8c8;"></div>
<svg class="r" style="left:3450.00px;top:214.00px;" width="46" height="42" viewBox="0 0 46 42"><g transform="translate(-3450,-214)">
<defs>
<linearGradient id="cpL" x1="0" y1="0" x2="0" y2="1"><stop offset="0" stop-color="#62b4f4"/><stop offset="0.3" stop-color="#4f8ee0"/><stop offset="0.6" stop-color="#6cae74"/><stop offset="1" stop-color="#ecc83a"/></linearGradient>
<linearGradient id="cpR" x1="1" y1="0" x2="0" y2="1"><stop offset="0" stop-color="#9a52e6"/><stop offset="0.45" stop-color="#dc6090"/><stop offset="1" stop-color="#f2ae5c"/></linearGradient>
<linearGradient id="cpT" x1="0" y1="0" x2="1" y2="1"><stop offset="0" stop-color="#1d35c4"/><stop offset="1" stop-color="#4a78dc"/></linearGradient>
<linearGradient id="cpB" x1="0" y1="0" x2="1" y2="1"><stop offset="0" stop-color="#f08a50"/><stop offset="1" stop-color="#c8402c"/></linearGradient>
</defs>
<path d="M3476 217.2 Q3481 216.8 3482.5 220 L3485 227.8 L3472 228.4 Z" fill="url(#cpT)"/>
<path d="M3461.5 242.5 L3473.5 242.5 L3470 253.2 Q3466 253.5 3464.8 249.5 Z" fill="url(#cpB)"/>
<path d="M3462 217.2 H3478.7 L3468.5 240.5 Q3467.5 242.7 3464.5 242.7 H3456.5 Q3452.3 242.4 3453 237.5 L3456.8 222.3 Q3458.3 217.2 3462 217.2 Z" fill="url(#cpL)"/>
<path d="M3479 228.5 H3489.5 Q3494 228.7 3493.2 233 L3488 249 Q3486.8 253.2 3482.5 253.2 H3469.7 Z" fill="url(#cpR)"/>
</g></svg>
<div class="r" style="left:3517.50px;top:209.20px;width:2.20px;height:53.80px;background:#c8c8c8;"></div>
<svg class="r" style="left:3650.20px;top:242.00px;" width="27.40000000000009" height="17.80000000000001" viewBox="0 0 27.40000000000009 17.80000000000001"><polyline points="3,3 13.7,14.8 24.4,3" fill="none" stroke="#2b2b2b" stroke-width="2.0" stroke-linecap="round" stroke-linejoin="round"/></svg>
<div class="r" style="left:6.00px;top:290.00px;width:279.00px;height:53.50px;background:#ffffff;border:2px solid #e3e3e3;box-sizing:border-box;"></div>
<div class="t" style="top:305.17px;font-size:29.33px;line-height:29.33px;color:#242424;left:19.00px;transform:scaleX(0.9042);transform-origin:0 0;">L4</div>
<svg class="r" style="left:256.50px;top:313.00px;" width="19.100000000000023" height="14" viewBox="0 0 19.100000000000023 14"><polyline points="3,3 9.6,11.0 16.1,3" fill="none" stroke="#242424" stroke-width="2.2" stroke-linecap="round" stroke-linejoin="round"/></svg>
<div class="r" style="left:301.00px;top:290.00px;width:200.00px;height:53.50px;background:#ffffff;border:2px solid #e3e3e3;box-sizing:border-box;"></div>
<svg class="r" style="left:322.00px;top:304.00px;" width="27" height="27" viewBox="0 0 27 27"><path d="M2 2 L25 25 M25 2 L2 25" stroke="#b0b0b0" stroke-width="2.2"/></svg>
<svg class="r" style="left:383.00px;top:304.00px;" width="36" height="27" viewBox="0 0 36 27"><path d="M2 14 L12 25 L34 2" fill="none" stroke="#b0b0b0" stroke-width="2.2"/></svg>
<div class="t" style="top:299.72px;font-size:34.00px;line-height:34.00px;color:#242424;left:452.00px;font-style:italic;font-family:'Liberation Serif',serif;">f</div>
<div class="t" style="top:305.64px;font-size:27.00px;line-height:27.00px;color:#242424;left:461.00px;font-style:italic;font-family:'Liberation Serif',serif;">x</div>
<div class="r" style="left:507.00px;top:290.00px;width:3198.00px;height:53.50px;background:#ffffff;border:2px solid #e3e3e3;box-sizing:border-box;"></div>
<svg class="r" style="left:3677.00px;top:308.00px;" width="26" height="19" viewBox="0 0 26 19"><polyline points="3,3 13.0,16.0 23.0,3" fill="none" stroke="#242424" stroke-width="2.4" stroke-linecap="round" stroke-linejoin="round"/></svg>
<div class="r" style="left:94.00px;top:420.00px;width:3594.00px;height:1626.00px;background:#ffffff;"></div>
<div class="r" style="left:94.00px;top:353.00px;width:3594.00px;height:67.00px;background:#f5f5f5;"></div>
<div class="t" style="top:383.38px;font-size:30.50px;line-height:30.50px;color:#616161;left:65.75px;width:200px;text-align:center;transform:scaleX(0.9300);transform-origin:50% 0;">A</div>
<div class="r" style="left:237.00px;top:378.00px;width:1.30px;height:42.00px;background:#e0e0e0;"></div>
<div class="t" style="top:383.38px;font-size:30.50px;line-height:30.50px;color:#616161;left:243.25px;width:200px;text-align:center;transform:scaleX(0.9300);transform-origin:50% 0;">B</div>
<div class="r" style="left:448.50px;top:378.00px;width:1.30px;height:42.00px;background:#e0e0e0;"></div>
<div class="t" style="top:383.38px;font-size:30.50px;line-height:30.50px;color:#616161;left:529.00px;width:200px;text-align:center;transform:scaleX(0.9300);transform-origin:50% 0;">C</div>
<div class="r" style="left:808.50px;top:378.00px;width:1.30px;height:42.00px;background:#e0e0e0;"></div>
<div class="t" style="top:383.38px;font-size:30.50px;line-height:30.50px;color:#616161;left:827.00px;width:200px;text-align:center;transform:scaleX(0.9300);transform-origin:50% 0;">D</div>
<div class="r" style="left:1044.50px;top:378.00px;width:1.30px;height:42.00px;background:#e0e0e0;"></div>
<div class="t" style="top:383.38px;font-size:30.50px;line-height:30.50px;color:#616161;left:1076.50px;width:200px;text-align:center;transform:scaleX(0.9300);transform-origin:50% 0;">E</div>
<div class="r" style="left:1307.50px;top:378.00px;width:1.30px;height:42.00px;background:#e0e0e0;"></div>
<div class="t" style="top:383.38px;font-size:30.50px;line-height:30.50px;color:#616161;left:1343.30px;width:200px;text-align:center;transform:scaleX(0.9300);transform-origin:50% 0;">F</div>
<div class="r" style="left:1578.10px;top:378.00px;width:1.30px;height:42.00px;background:#e0e0e0;"></div>
<div class="t" style="top:383.38px;font-size:30.50px;line-height:30.50px;color:#616161;left:1582.80px;width:200px;text-align:center;transform:scaleX(0.9300);transform-origin:50% 0;">G</div>
<div class="r" style="left:1786.50px;top:378.00px;width:1.30px;height:42.00px;background:#e0e0e0;"></div>
<div class="t" style="top:383.38px;font-size:30.50px;line-height:30.50px;color:#616161;left:1795.00px;width:200px;text-align:center;transform:scaleX(0.9300);transform-origin:50% 0;">H</div>
<div class="r" style="left:2002.50px;top:378.00px;width:1.30px;height:42.00px;background:#e0e0e0;"></div>
<div class="t" style="top:383.38px;font-size:30.50px;line-height:30.50px;color:#616161;left:1992.00px;width:200px;text-align:center;transform:scaleX(0.9300);transform-origin:50% 0;">I</div>
<div class="r" style="left:2180.50px;top:378.00px;width:1.30px;height:42.00px;background:#e0e0e0;"></div>
<div class="t" style="top:383.38px;font-size:30.50px;line-height:30.50px;color:#616161;left:2194.50px;width:200px;text-align:center;transform:scaleX(0.9300);transform-origin:50% 0;">J</div>
<div class="r" style="left:2407.50px;top:378.00px;width:1.30px;height:42.00px;background:#e0e0e0;"></div>
<div class="t" style="top:383.38px;font-size:30.50px;line-height:30.50px;color:#616161;left:2422.00px;width:200px;text-align:center;transform:scaleX(0.9300);transform-origin:50% 0;">K</div>
<div class="r" style="left:2636.00px;top:378.00px;width:228.00px;height:42.00px;background:#d3e9d8;"></div>
<div class="r" style="left:2635.50px;top:378.00px;width:1.30px;height:42.00px;background:#e0e0e0;"></div>
<div class="t" style="top:383.38px;font-size:30.50px;line-height:30.50px;color:#2e6b3a;left:2650.00px;width:200px;text-align:center;transform:scaleX(0.9300);transform-origin:50% 0;">L</div>
<div class="r" style="left:2863.50px;top:378.00px;width:1.30px;height:42.00px;background:#e0e0e0;"></div>
<div class="t" style="top:383.38px;font-size:30.50px;line-height:30.50px;color:#616161;left:2836.00px;width:200px;text-align:center;transform:scaleX(0.9300);transform-origin:50% 0;">M</div>
<div class="r" style="left:3007.50px;top:378.00px;width:1.30px;height:42.00px;background:#e0e0e0;"></div>
<div class="t" style="top:383.38px;font-size:30.50px;line-height:30.50px;color:#616161;left:2980.00px;width:200px;text-align:center;transform:scaleX(0.9300);transform-origin:50% 0;">N</div>
<div class="r" style="left:3151.50px;top:378.00px;width:1.30px;height:42.00px;background:#e0e0e0;"></div>
<div class="t" style="top:383.38px;font-size:30.50px;line-height:30.50px;color:#616161;left:3124.00px;width:200px;text-align:center;transform:scaleX(0.9300);transform-origin:50% 0;">O</div>
<div class="r" style="left:3295.50px;top:378.00px;width:1.30px;height:42.00px;background:#e0e0e0;"></div>
<div class="t" style="top:383.38px;font-size:30.50px;line-height:30.50px;color:#616161;left:3268.00px;width:200px;text-align:center;transform:scaleX(0.9300);transform-origin:50% 0;">P</div>
<div class="r" style="left:3439.50px;top:378.00px;width:1.30px;height:42.00px;background:#e0e0e0;"></div>
<div class="t" style="top:383.38px;font-size:30.50px;line-height:30.50px;color:#616161;left:3412.00px;width:200px;text-align:center;transform:scaleX(0.9300);transform-origin:50% 0;">Q</div>
<div class="r" style="left:3583.50px;top:378.00px;width:1.30px;height:42.00px;background:#e0e0e0;"></div>
<div class="t" style="top:383.38px;font-size:30.50px;line-height:30.50px;color:#616161;left:3556.00px;width:200px;text-align:center;transform:scaleX(0.9300);transform-origin:50% 0;">R</div>
<div class="r" style="left:94.00px;top:419.00px;width:3594.00px;height:1.80px;background:#c6c6c6;"></div>
<div class="r" style="left:2634.00px;top:416.00px;width:232.00px;height:4.80px;background:#3a7d44;"></div>
<div class="r" style="left:89.00px;top:353.00px;width:5.00px;height:67.80px;background:#bdbdbd;"></div>
<div class="r" style="left:0.00px;top:416.00px;width:94.00px;height:4.80px;background:#bdbdbd;"></div>
<svg class="r" style="left:58.00px;top:385.00px;" width="27" height="27" viewBox="0 0 27 27"><polygon points="27,0 27,27 0,27" fill="#bdbdbd"/></svg>
<div class="r" style="left:0.00px;top:420.80px;width:93.00px;height:1625.20px;background:#f5f5f5;"></div>
<div class="r" style="left:0.00px;top:462.40px;width:92.00px;height:1.20px;background:#e0e0e0;"></div>
<div class="t" style="top:427.28px;font-size:30.50px;line-height:30.50px;color:#616161;left:-8.00px;width:90px;text-align:right;transform:scaleX(0.9600);transform-origin:100% 0;">1</div>
<div class="r" style="left:0.00px;top:541.40px;width:92.00px;height:1.20px;background:#e0e0e0;"></div>
<div class="t" style="top:487.88px;font-size:30.50px;line-height:30.50px;color:#616161;left:-8.00px;width:90px;text-align:right;transform:scaleX(0.9600);transform-origin:100% 0;">2</div>
<div class="r" style="left:0.00px;top:584.05px;width:92.00px;height:1.20px;background:#e0e0e0;"></div>
<div class="t" style="top:548.71px;font-size:30.50px;line-height:30.50px;color:#616161;left:-8.00px;width:90px;text-align:right;transform:scaleX(0.9600);transform-origin:100% 0;">3</div>
<div class="r" style="left:0.00px;top:584.65px;width:93.00px;height:42.75px;background:#d3e9d8;"></div>
<div class="r" style="left:0.00px;top:626.80px;width:92.00px;height:1.20px;background:#e0e0e0;"></div>
<div class="t" style="top:591.41px;font-size:30.50px;line-height:30.50px;color:#2e6b3a;left:-8.00px;width:90px;text-align:right;transform:scaleX(0.9600);transform-origin:100% 0;">4</div>
<div class="r" style="left:0.00px;top:669.55px;width:92.00px;height:1.20px;background:#e0e0e0;"></div>
<div class="t" style="top:634.16px;font-size:30.50px;line-height:30.50px;color:#616161;left:-8.00px;width:90px;text-align:right;transform:scaleX(0.9600);transform-origin:100% 0;">5</div>
<div class="r" style="left:0.00px;top:712.30px;width:92.00px;height:1.20px;background:#e0e0e0;"></div>
<div class="t" style="top:676.91px;font-size:30.50px;line-height:30.50px;color:#616161;left:-8.00px;width:90px;text-align:right;transform:scaleX(0.9600);transform-origin:100% 0;">6</div>
<div class="r" style="left:0.00px;top:755.05px;width:92.00px;height:1.20px;background:#e0e0e0;"></div>
<div class="t" style="top:719.66px;font-size:30.50px;line-height:30.50px;color:#616161;left:-8.00px;width:90px;text-align:right;transform:scaleX(0.9600);transform-origin:100% 0;">7</div>
<div class="r" style="left:0.00px;top:797.80px;width:92.00px;height:1.20px;background:#e0e0e0;"></div>
<div class="t" style="top:762.41px;font-size:30.50px;line-height:30.50px;color:#616161;left:-8.00px;width:90px;text-align:right;transform:scaleX(0.9600);transform-origin:100% 0;">8</div>
<div class="r" style="left:0.00px;top:840.55px;width:92.00px;height:1.20px;background:#e0e0e0;"></div>
<div class="t" style="top:805.16px;font-size:30.50px;line-height:30.50px;color:#616161;left:-8.00px;width:90px;text-align:right;transform:scaleX(0.9600);transform-origin:100% 0;">9</div>
<div class="r" style="left:0.00px;top:883.30px;width:92.00px;height:1.20px;background:#e0e0e0;"></div>
<div class="t" style="top:847.91px;font-size:30.50px;line-height:30.50px;color:#616161;left:-8.00px;width:90px;text-align:right;transform:scaleX(0.9600);transform-origin:100% 0;">10</div>
<div class="r" style="left:0.00px;top:926.05px;width:92.00px;height:1.20px;background:#e0e0e0;"></div>
<div class="t" style="top:890.66px;font-size:30.50px;line-height:30.50px;color:#616161;left:-8.00px;width:90px;text-align:right;transform:scaleX(0.9600);transform-origin:100% 0;">11</div>
<div class="r" style="left:0.00px;top:968.80px;width:92.00px;height:1.20px;background:#e0e0e0;"></div>
<div class="t" style="top:933.41px;font-size:30.50px;line-height:30.50px;color:#616161;left:-8.00px;width:90px;text-align:right;transform:scaleX(0.9600);transform-origin:100% 0;">12</div>
<div class="r" style="left:0.00px;top:1011.55px;width:92.00px;height:1.20px;background:#e0e0e0;"></div>
<div class="t" style="top:976.16px;font-size:30.50px;line-height:30.50px;color:#616161;left:-8.00px;width:90px;text-align:right;transform:scaleX(0.9600);transform-origin:100% 0;">13</div>
<div class="r" style="left:0.00px;top:1054.30px;width:92.00px;height:1.20px;background:#e0e0e0;"></div>
<div class="t" style="top:1018.91px;font-size:30.50px;line-height:30.50px;color:#616161;left:-8.00px;width:90px;text-align:right;transform:scaleX(0.9600);transform-origin:100% 0;">14</div>
<div class="r" style="left:0.00px;top:1097.05px;width:92.00px;height:1.20px;background:#e0e0e0;"></div>
<div class="t" style="top:1061.66px;font-size:30.50px;line-height:30.50px;color:#616161;left:-8.00px;width:90px;text-align:right;transform:scaleX(0.9600);transform-origin:100% 0;">15</div>
<div class="r" style="left:0.00px;top:1139.80px;width:92.00px;height:1.20px;background:#e0e0e0;"></div>
<div class="t" style="top:1104.41px;font-size:30.50px;line-height:30.50px;color:#616161;left:-8.00px;width:90px;text-align:right;transform:scaleX(0.9600);transform-origin:100% 0;">16</div>
<div class="r" style="left:0.00px;top:1182.55px;width:92.00px;height:1.20px;background:#e0e0e0;"></div>
<div class="t" style="top:1147.16px;font-size:30.50px;line-height:30.50px;color:#616161;left:-8.00px;width:90px;text-align:right;transform:scaleX(0.9600);transform-origin:100% 0;">17</div>
<div class="r" style="left:0.00px;top:1225.30px;width:92.00px;height:1.20px;background:#e0e0e0;"></div>
<div class="t" style="top:1189.91px;font-size:30.50px;line-height:30.50px;color:#616161;left:-8.00px;width:90px;text-align:right;transform:scaleX(0.9600);transform-origin:100% 0;">18</div>
<div class="r" style="left:0.00px;top:1268.05px;width:92.00px;height:1.20px;background:#e0e0e0;"></div>
<div class="t" style="top:1232.66px;font-size:30.50px;line-height:30.50px;color:#616161;left:-8.00px;width:90px;text-align:right;transform:scaleX(0.9600);transform-origin:100% 0;">19</div>
<div class="r" style="left:0.00px;top:1310.80px;width:92.00px;height:1.20px;background:#e0e0e0;"></div>
<div class="t" style="top:1275.41px;font-size:30.50px;line-height:30.50px;color:#616161;left:-8.00px;width:90px;text-align:right;transform:scaleX(0.9600);transform-origin:100% 0;">20</div>
<div class="r" style="left:0.00px;top:1353.55px;width:92.00px;height:1.20px;background:#e0e0e0;"></div>
<div class="t" style="top:1318.16px;font-size:30.50px;line-height:30.50px;color:#616161;left:-8.00px;width:90px;text-align:right;transform:scaleX(0.9600);transform-origin:100% 0;">21</div>
<div class="r" style="left:0.00px;top:1396.30px;width:92.00px;height:1.20px;background:#e0e0e0;"></div>
<div class="t" style="top:1360.91px;font-size:30.50px;line-height:30.50px;color:#616161;left:-8.00px;width:90px;text-align:right;transform:scaleX(0.9600);transform-origin:100% 0;">22</div>
<div class="r" style="left:0.00px;top:1439.05px;width:92.00px;height:1.20px;background:#e0e0e0;"></div>
<div class="t" style="top:1403.66px;font-size:30.50px;line-height:30.50px;color:#616161;left:-8.00px;width:90px;text-align:right;transform:scaleX(0.9600);transform-origin:100% 0;">23</div>
<div class="r" style="left:0.00px;top:1481.80px;width:92.00px;height:1.20px;background:#e0e0e0;"></div>
<div class="t" style="top:1446.41px;font-size:30.50px;line-height:30.50px;color:#616161;left:-8.00px;width:90px;text-align:right;transform:scaleX(0.9600);transform-origin:100% 0;">24</div>
<div class="r" style="left:0.00px;top:1524.55px;width:92.00px;height:1.20px;background:#e0e0e0;"></div>
<div class="t" style="top:1489.16px;font-size:30.50px;line-height:30.50px;color:#616161;left:-8.00px;width:90px;text-align:right;transform:scaleX(0.9600);transform-origin:100% 0;">25</div>
<div class="r" style="left:0.00px;top:1567.30px;width:92.00px;height:1.20px;background:#e0e0e0;"></div>
<div class="t" style="top:1531.91px;font-size:30.50px;line-height:30.50px;color:#616161;left:-8.00px;width:90px;text-align:right;transform:scaleX(0.9600);transform-origin:100% 0;">26</div>
<div class="r" style="left:0.00px;top:1610.05px;width:92.00px;height:1.20px;background:#e0e0e0;"></div>
<div class="t" style="top:1574.66px;font-size:30.50px;line-height:30.50px;color:#616161;left:-8.00px;width:90px;text-align:right;transform:scaleX(0.9600);transform-origin:100% 0;">27</div>
<div class="r" style="left:0.00px;top:1652.80px;width:92.00px;height:1.20px;background:#e0e0e0;"></div>
<div class="t" style="top:1617.41px;font-size:30.50px;line-height:30.50px;color:#616161;left:-8.00px;width:90px;text-align:right;transform:scaleX(0.9600);transform-origin:100% 0;">28</div>
<div class="r" style="left:0.00px;top:1695.55px;width:92.00px;height:1.20px;background:#e0e0e0;"></div>
<div class="t" style="top:1660.16px;font-size:30.50px;line-height:30.50px;color:#616161;left:-8.00px;width:90px;text-align:right;transform:scaleX(0.9600);transform-origin:100% 0;">29</div>
<div class="r" style="left:0.00px;top:1738.30px;width:92.00px;height:1.20px;background:#e0e0e0;"></div>
<div class="t" style="top:1702.91px;font-size:30.50px;line-height:30.50px;color:#616161;left:-8.00px;width:90px;text-align:right;transform:scaleX(0.9600);transform-origin:100% 0;">30</div>
<div class="r" style="left:0.00px;top:1781.05px;width:92.00px;height:1.20px;background:#e0e0e0;"></div>
<div class="t" style="top:1745.66px;font-size:30.50px;line-height:30.50px;color:#616161;left:-8.00px;width:90px;text-align:right;transform:scaleX(0.9600);transform-origin:100% 0;">31</div>
<div class="r" style="left:0.00px;top:1823.80px;width:92.00px;height:1.20px;background:#e0e0e0;"></div>
<div class="t" style="top:1788.41px;font-size:30.50px;line-height:30.50px;color:#616161;left:-8.00px;width:90px;text-align:right;transform:scaleX(0.9600);transform-origin:100% 0;">32</div>
<div class="r" style="left:0.00px;top:1866.55px;width:92.00px;height:1.20px;background:#e0e0e0;"></div>
<div class="t" style="top:1831.16px;font-size:30.50px;line-height:30.50px;color:#616161;left:-8.00px;width:90px;text-align:right;transform:scaleX(0.9600);transform-origin:100% 0;">33</div>
<div class="r" style="left:0.00px;top:1909.30px;width:92.00px;height:1.20px;background:#e0e0e0;"></div>
<div class="t" style="top:1873.91px;font-size:30.50px;line-height:30.50px;color:#616161;left:-8.00px;width:90px;text-align:right;transform:scaleX(0.9600);transform-origin:100% 0;">34</div>
<div class="r" style="left:0.00px;top:1952.05px;width:92.00px;height:1.20px;background:#e0e0e0;"></div>
<div class="t" style="top:1916.66px;font-size:30.50px;line-height:30.50px;color:#616161;left:-8.00px;width:90px;text-align:right;transform:scaleX(0.9600);transform-origin:100% 0;">35</div>
<div class="r" style="left:0.00px;top:1994.80px;width:92.00px;height:1.20px;background:#e0e0e0;"></div>
<div class="t" style="top:1959.41px;font-size:30.50px;line-height:30.50px;color:#616161;left:-8.00px;width:90px;text-align:right;transform:scaleX(0.9600);transform-origin:100% 0;">36</div>
<div class="r" style="left:0.00px;top:2037.55px;width:92.00px;height:1.20px;background:#e0e0e0;"></div>
<div class="t" style="top:2002.16px;font-size:30.50px;line-height:30.50px;color:#616161;left:-8.00px;width:90px;text-align:right;transform:scaleX(0.9600);transform-origin:100% 0;">37</div>
<div class="r" style="left:92.50px;top:420.80px;width:1.50px;height:1625.20px;background:#c6c6c6;"></div>
<div class="r" style="left:90.00px;top:584.65px;width:4.00px;height:42.75px;background:#3a7d44;"></div>
<div class="t" style="top:478.71px;font-size:55.87px;line-height:55.87px;color:#000000;font-weight:700;left:246.00px;transform:scaleX(0.8681);transform-origin:0 0;">Trial Balance (LCY)</div>
<div class="t" style="top:507.84px;font-size:30.31px;line-height:30.31px;color:#000000;left:975.00px;width:1200px;text-align:right;transform:scaleX(0.9000);transform-origin:100% 0;">CRONUS USA, Inc.</div>
<div class="t" style="top:551.82px;font-size:29.75px;line-height:29.75px;color:#000000;left:975.00px;width:1200px;text-align:right;transform:scaleX(0.9792);transform-origin:100% 0;">Data retrieved: 17 December 2024, 12:45</div>
<div class="r" style="left:236.50px;top:754.00px;width:1768.50px;height:2.00px;background:#d4d4d8;"></div>
<div class="r" style="left:237.00px;top:756.00px;width:1767.00px;height:41.00px;background:#e0eef3;"></div>
<div class="r" style="left:236.50px;top:796.80px;width:1768.50px;height:2.00px;background:#d4d4d8;"></div>
<div class="t" style="top:766.05px;font-size:29.00px;line-height:29.00px;color:#000;left:244.80px;">No.</div>
<div class="t" style="top:766.05px;font-size:29.00px;line-height:29.00px;color:#000;left:455.00px;">Name</div>
<div class="t" style="top:766.05px;font-size:29.00px;line-height:29.00px;color:#000;left:815.00px;">Account Type</div>
<div class="t" style="top:766.05px;font-size:29.00px;line-height:29.00px;color:#000;left:1050.50px;transform:scaleX(1.0166);transform-origin:0 0;">Net Change (Debit)</div>
<div class="t" style="top:766.05px;font-size:29.00px;line-height:29.00px;color:#000;left:1314.00px;transform:scaleX(1.0058);transform-origin:0 0;">Net Change (Credit)</div>
<div class="t" style="top:766.05px;font-size:29.00px;line-height:29.00px;color:#000;left:1584.00px;transform:scaleX(0.9906);transform-origin:0 0;">Balance (Debit)</div>
<div class="t" style="top:766.05px;font-size:29.00px;line-height:29.00px;color:#000;left:1793.50px;transform:scaleX(0.9784);transform-origin:0 0;">Balance (Credit)</div>
<div class="r" style="left:409.00px;top:758.00px;width:36.50px;height:36.00px;background:#ffffff;border:1.3px solid #a8a8a8;border-radius:2px;box-sizing:border-box;"></div>
<svg class="r" style="left:418.00px;top:769.00px;" width="18.5" height="13" viewBox="0 0 18.5 13"><polyline points="3,3 9.2,10.0 15.5,3" fill="none" stroke="#8a8a8a" stroke-width="1.6" stroke-linecap="round" stroke-linejoin="round"/></svg>
<div class="r" style="left:769.00px;top:758.00px;width:36.50px;height:36.00px;background:#ffffff;border:1.3px solid #a8a8a8;border-radius:2px;box-sizing:border-box;"></div>
<svg class="r" style="left:778.00px;top:769.00px;" width="18.5" height="13" viewBox="0 0 18.5 13"><polyline points="3,3 9.2,10.0 15.5,3" fill="none" stroke="#8a8a8a" stroke-width="1.6" stroke-linecap="round" stroke-linejoin="round"/></svg>
<div class="r" style="left:1005.00px;top:758.00px;width:36.50px;height:36.00px;background:#ffffff;border:1.3px solid #a8a8a8;border-radius:2px;box-sizing:border-box;"></div>
<svg class="r" style="left:1014.00px;top:769.00px;" width="18.5" height="13" viewBox="0 0 18.5 13"><polyline points="3,3 9.2,10.0 15.5,3" fill="none" stroke="#8a8a8a" stroke-width="1.6" stroke-linecap="round" stroke-linejoin="round"/></svg>
<svg class="r" style="left:244.00px;top:811.00px;" width="21" height="21" viewBox="0 0 21 21"><rect x="0.7" y="0.7" width="19.6" height="19.6" fill="#fafafa" stroke="#3a3a3a" stroke-width="1.3"/><line x1="2.5" y1="10.5" x2="18.5" y2="10.5" stroke="#3a3a3a" stroke-width="1.3"/></svg>
<div class="t" style="top:808.75px;font-size:29.00px;line-height:29.00px;color:#000;left:271.50px;transform:scaleX(0.9750);transform-origin:0 0;">10000</div>
<svg class="r" style="left:455.50px;top:811.00px;" width="21" height="21" viewBox="0 0 21 21"><rect x="0.7" y="0.7" width="19.6" height="19.6" fill="#fafafa" stroke="#3a3a3a" stroke-width="1.3"/><line x1="2.5" y1="10.5" x2="18.5" y2="10.5" stroke="#3a3a3a" stroke-width="1.3"/></svg>
<div class="t" style="top:808.75px;font-size:29.00px;line-height:29.00px;color:#000;left:481.00px;width:372.73px;overflow:hidden;transform:scaleX(0.8800);transform-origin:0 0;">BALANCE SHEET</div>
<div class="t" style="top:808.75px;font-size:29.00px;line-height:29.00px;color:#000;left:815.00px;">Heading</div>
<div class="t" style="top:808.75px;font-size:29.00px;line-height:29.00px;color:#000;left:1001.30px;width:300px;text-align:right;transform:scaleX(0.9550);transform-origin:100% 0;">0.00</div>
<div class="t" style="top:808.75px;font-size:29.00px;line-height:29.00px;color:#000;left:1271.30px;width:300px;text-align:right;transform:scaleX(0.9550);transform-origin:100% 0;">0.00</div>
<div class="t" style="top:808.75px;font-size:29.00px;line-height:29.00px;color:#000;left:1481.00px;width:300px;text-align:right;transform:scaleX(0.9550);transform-origin:100% 0;">0.00</div>
<div class="t" style="top:808.75px;font-size:29.00px;line-height:29.00px;color:#000;left:1696.30px;width:300px;text-align:right;transform:scaleX(0.9550);transform-origin:100% 0;">0.00</div>
<div class="r" style="left:236.50px;top:840.15px;width:1768.50px;height:2.00px;background:#d4d4d8;"></div>
<svg class="r" style="left:244.00px;top:853.75px;" width="21" height="21" viewBox="0 0 21 21"><rect x="0.7" y="0.7" width="19.6" height="19.6" fill="#fafafa" stroke="#3a3a3a" stroke-width="1.3"/><line x1="2.5" y1="10.5" x2="18.5" y2="10.5" stroke="#3a3a3a" stroke-width="1.3"/></svg>
<div class="t" style="top:851.50px;font-size:29.00px;line-height:29.00px;color:#000;left:271.50px;transform:scaleX(0.9750);transform-origin:0 0;">10001</div>
<svg class="r" style="left:455.50px;top:853.75px;" width="21" height="21" viewBox="0 0 21 21"><rect x="0.7" y="0.7" width="19.6" height="19.6" fill="#fafafa" stroke="#3a3a3a" stroke-width="1.3"/><line x1="2.5" y1="10.5" x2="18.5" y2="10.5" stroke="#3a3a3a" stroke-width="1.3"/></svg>
<div class="t" style="top:851.50px;font-size:29.00px;line-height:29.00px;color:#000;left:481.00px;width:372.73px;overflow:hidden;transform:scaleX(0.8800);transform-origin:0 0;">ASSETS</div>
<div class="t" style="top:851.50px;font-size:29.00px;line-height:29.00px;color:#000;left:815.00px;">Begin-Total</div>
<div class="t" style="top:851.50px;font-size:29.00px;line-height:29.00px;color:#000;left:1001.30px;width:300px;text-align:right;transform:scaleX(0.9550);transform-origin:100% 0;">0.00</div>
<div class="t" style="top:851.50px;font-size:29.00px;line-height:29.00px;color:#000;left:1271.30px;width:300px;text-align:right;transform:scaleX(0.9550);transform-origin:100% 0;">0.00</div>
<div class="t" style="top:851.50px;font-size:29.00px;line-height:29.00px;color:#000;left:1481.00px;width:300px;text-align:right;transform:scaleX(0.9550);transform-origin:100% 0;">0.00</div>
<div class="t" style="top:851.50px;font-size:29.00px;line-height:29.00px;color:#000;left:1696.30px;width:300px;text-align:right;transform:scaleX(0.9550);transform-origin:100% 0;">0.00</div>
<div class="r" style="left:236.50px;top:882.90px;width:1768.50px;height:2.00px;background:#d4d4d8;"></div>
<svg class="r" style="left:244.00px;top:896.50px;" width="21" height="21" viewBox="0 0 21 21"><rect x="0.7" y="0.7" width="19.6" height="19.6" fill="#fafafa" stroke="#3a3a3a" stroke-width="1.3"/><line x1="2.5" y1="10.5" x2="18.5" y2="10.5" stroke="#3a3a3a" stroke-width="1.3"/></svg>
<div class="t" style="top:894.25px;font-size:29.00px;line-height:29.00px;color:#000;left:271.50px;transform:scaleX(0.9750);transform-origin:0 0;">10100</div>
<svg class="r" style="left:455.50px;top:896.50px;" width="21" height="21" viewBox="0 0 21 21"><rect x="0.7" y="0.7" width="19.6" height="19.6" fill="#fafafa" stroke="#3a3a3a" stroke-width="1.3"/><line x1="2.5" y1="10.5" x2="18.5" y2="10.5" stroke="#3a3a3a" stroke-width="1.3"/></svg>
<div class="t" style="top:894.25px;font-size:29.00px;line-height:29.00px;color:#000;left:498.00px;width:311.00px;overflow:hidden;">Checking account</div>
<div class="t" style="top:894.25px;font-size:29.00px;line-height:29.00px;color:#000;left:815.00px;">Posting</div>
<div class="t" style="top:894.25px;font-size:29.00px;line-height:29.00px;color:#000;left:1001.30px;width:300px;text-align:right;transform:scaleX(0.9550);transform-origin:100% 0;">181,842.72</div>
<div class="t" style="top:894.25px;font-size:29.00px;line-height:29.00px;color:#000;left:1271.30px;width:300px;text-align:right;transform:scaleX(0.9550);transform-origin:100% 0;">0.00</div>
<div class="t" style="top:894.25px;font-size:29.00px;line-height:29.00px;color:#000;left:1481.00px;width:300px;text-align:right;transform:scaleX(0.9550);transform-origin:100% 0;">181,842.72</div>
<div class="t" style="top:894.25px;font-size:29.00px;line-height:29.00px;color:#000;left:1696.30px;width:300px;text-align:right;transform:scaleX(0.9550);transform-origin:100% 0;">0.00</div>
<div class="r" style="left:236.50px;top:925.65px;width:1768.50px;height:2.00px;background:#d4d4d8;"></div>
<svg class="r" style="left:244.00px;top:939.25px;" width="21" height="21" viewBox="0 0 21 21"><rect x="0.7" y="0.7" width="19.6" height="19.6" fill="#fafafa" stroke="#3a3a3a" stroke-width="1.3"/><line x1="2.5" y1="10.5" x2="18.5" y2="10.5" stroke="#3a3a3a" stroke-width="1.3"/></svg>
<div class="t" style="top:937.00px;font-size:29.00px;line-height:29.00px;color:#000;left:271.50px;transform:scaleX(0.9750);transform-origin:0 0;">10200</div>
<svg class="r" style="left:455.50px;top:939.25px;" width="21" height="21" viewBox="0 0 21 21"><rect x="0.7" y="0.7" width="19.6" height="19.6" fill="#fafafa" stroke="#3a3a3a" stroke-width="1.3"/><line x1="2.5" y1="10.5" x2="18.5" y2="10.5" stroke="#3a3a3a" stroke-width="1.3"/></svg>
<div class="t" style="top:937.00px;font-size:29.00px;line-height:29.00px;color:#000;left:498.00px;width:311.00px;overflow:hidden;">Saving account</div>
<div class="t" style="top:937.00px;font-size:29.00px;line-height:29.00px;color:#000;left:815.00px;">Posting</div>
<div class="t" style="top:937.00px;font-size:29.00px;line-height:29.00px;color:#000;left:1001.30px;width:300px;text-align:right;transform:scaleX(0.9550);transform-origin:100% 0;">0.00</div>
<div class="t" style="top:937.00px;font-size:29.00px;line-height:29.00px;color:#000;left:1271.30px;width:300px;text-align:right;transform:scaleX(0.9550);transform-origin:100% 0;">0.00</div>
<div class="t" style="top:937.00px;font-size:29.00px;line-height:29.00px;color:#000;left:1481.00px;width:300px;text-align:right;transform:scaleX(0.9550);transform-origin:100% 0;">0.00</div>
<div class="t" style="top:937.00px;font-size:29.00px;line-height:29.00px;color:#000;left:1696.30px;width:300px;text-align:right;transform:scaleX(0.9550);transform-origin:100% 0;">0.00</div>
<div class="r" style="left:236.50px;top:968.40px;width:1768.50px;height:2.00px;background:#d4d4d8;"></div>
<svg class="r" style="left:244.00px;top:982.00px;" width="21" height="21" viewBox="0 0 21 21"><rect x="0.7" y="0.7" width="19.6" height="19.6" fill="#fafafa" stroke="#3a3a3a" stroke-width="1.3"/><line x1="2.5" y1="10.5" x2="18.5" y2="10.5" stroke="#3a3a3a" stroke-width="1.3"/></svg>
<div class="t" style="top:979.75px;font-size:29.00px;line-height:29.00px;color:#000;left:271.50px;transform:scaleX(0.9750);transform-origin:0 0;">10300</div>
<svg class="r" style="left:455.50px;top:982.00px;" width="21" height="21" viewBox="0 0 21 21"><rect x="0.7" y="0.7" width="19.6" height="19.6" fill="#fafafa" stroke="#3a3a3a" stroke-width="1.3"/><line x1="2.5" y1="10.5" x2="18.5" y2="10.5" stroke="#3a3a3a" stroke-width="1.3"/></svg>
<div class="t" style="top:979.75px;font-size:29.00px;line-height:29.00px;color:#000;left:498.00px;width:311.00px;overflow:hidden;">Petty Cash</div>
<div class="t" style="top:979.75px;font-size:29.00px;line-height:29.00px;color:#000;left:815.00px;">Posting</div>
<div class="t" style="top:979.75px;font-size:29.00px;line-height:29.00px;color:#000;left:1001.30px;width:300px;text-align:right;transform:scaleX(0.9550);transform-origin:100% 0;">1,224,787.68</div>
<div class="t" style="top:979.75px;font-size:29.00px;line-height:29.00px;color:#000;left:1271.30px;width:300px;text-align:right;transform:scaleX(0.9550);transform-origin:100% 0;">0.00</div>
<div class="t" style="top:979.75px;font-size:29.00px;line-height:29.00px;color:#000;left:1481.00px;width:300px;text-align:right;transform:scaleX(0.9550);transform-origin:100% 0;">1,224,787.68</div>
<div class="t" style="top:979.75px;font-size:29.00px;line-height:29.00px;color:#000;left:1696.30px;width:300px;text-align:right;transform:scaleX(0.9550);transform-origin:100% 0;">0.00</div>
<div class="r" style="left:236.50px;top:1011.15px;width:1768.50px;height:2.00px;background:#d4d4d8;"></div>
<svg class="r" style="left:244.00px;top:1024.75px;" width="21" height="21" viewBox="0 0 21 21"><rect x="0.7" y="0.7" width="19.6" height="19.6" fill="#fafafa" stroke="#3a3a3a" stroke-width="1.3"/><line x1="2.5" y1="10.5" x2="18.5" y2="10.5" stroke="#3a3a3a" stroke-width="1.3"/></svg>
<div class="t" style="top:1022.50px;font-size:29.00px;line-height:29.00px;color:#000;left:271.50px;transform:scaleX(0.9750);transform-origin:0 0;">10400</div>
<svg class="r" style="left:455.50px;top:1024.75px;" width="21" height="21" viewBox="0 0 21 21"><rect x="0.7" y="0.7" width="19.6" height="19.6" fill="#fafafa" stroke="#3a3a3a" stroke-width="1.3"/><line x1="2.5" y1="10.5" x2="18.5" y2="10.5" stroke="#3a3a3a" stroke-width="1.3"/></svg>
<div class="t" style="top:1022.50px;font-size:29.00px;line-height:29.00px;color:#000;left:498.00px;width:311.00px;overflow:hidden;">Accounts Receivable</div>
<div class="t" style="top:1022.50px;font-size:29.00px;line-height:29.00px;color:#000;left:815.00px;">Posting</div>
<div class="t" style="top:1022.50px;font-size:29.00px;line-height:29.00px;color:#000;left:1001.30px;width:300px;text-align:right;transform:scaleX(0.9550);transform-origin:100% 0;">990,372.32</div>
<div class="t" style="top:1022.50px;font-size:29.00px;line-height:29.00px;color:#000;left:1271.30px;width:300px;text-align:right;transform:scaleX(0.9550);transform-origin:100% 0;">0.00</div>
<div class="t" style="top:1022.50px;font-size:29.00px;line-height:29.00px;color:#000;left:1481.00px;width:300px;text-align:right;transform:scaleX(0.9550);transform-origin:100% 0;">990,372.32</div>
<div class="t" style="top:1022.50px;font-size:29.00px;line-height:29.00px;color:#000;left:1696.30px;width:300px;text-align:right;transform:scaleX(0.9550);transform-origin:100% 0;">0.00</div>
<div class="r" style="left:236.50px;top:1053.90px;width:1768.50px;height:2.00px;background:#d4d4d8;"></div>
<svg class="r" style="left:244.00px;top:1067.50px;" width="21" height="21" viewBox="0 0 21 21"><rect x="0.7" y="0.7" width="19.6" height="19.6" fill="#fafafa" stroke="#3a3a3a" stroke-width="1.3"/><line x1="2.5" y1="10.5" x2="18.5" y2="10.5" stroke="#3a3a3a" stroke-width="1.3"/></svg>
<div class="t" style="top:1065.25px;font-size:29.00px;line-height:29.00px;color:#000;left:271.50px;transform:scaleX(0.9750);transform-origin:0 0;">10500</div>
<svg class="r" style="left:455.50px;top:1067.50px;" width="21" height="21" viewBox="0 0 21 21"><rect x="0.7" y="0.7" width="19.6" height="19.6" fill="#fafafa" stroke="#3a3a3a" stroke-width="1.3"/><line x1="2.5" y1="10.5" x2="18.5" y2="10.5" stroke="#3a3a3a" stroke-width="1.3"/></svg>
<div class="t" style="top:1065.25px;font-size:29.00px;line-height:29.00px;color:#000;left:498.00px;width:311.00px;overflow:hidden;">Prepaid Rent</div>
<div class="t" style="top:1065.25px;font-size:29.00px;line-height:29.00px;color:#000;left:815.00px;">Posting</div>
<div class="t" style="top:1065.25px;font-size:29.00px;line-height:29.00px;color:#000;left:1001.30px;width:300px;text-align:right;transform:scaleX(0.9550);transform-origin:100% 0;">0.00</div>
<div class="t" style="top:1065.25px;font-size:29.00px;line-height:29.00px;color:#000;left:1271.30px;width:300px;text-align:right;transform:scaleX(0.9550);transform-origin:100% 0;">0.00</div>
<div class="t" style="top:1065.25px;font-size:29.00px;line-height:29.00px;color:#000;left:1481.00px;width:300px;text-align:right;transform:scaleX(0.9550);transform-origin:100% 0;">0.00</div>
<div class="t" style="top:1065.25px;font-size:29.00px;line-height:29.00px;color:#000;left:1696.30px;width:300px;text-align:right;transform:scaleX(0.9550);transform-origin:100% 0;">0.00</div>
<div class="r" style="left:236.50px;top:1096.65px;width:1768.50px;height:2.00px;background:#d4d4d8;"></div>
<svg class="r" style="left:244.00px;top:1110.25px;" width="21" height="21" viewBox="0 0 21 21"><rect x="0.7" y="0.7" width="19.6" height="19.6" fill="#fafafa" stroke="#3a3a3a" stroke-width="1.3"/><line x1="2.5" y1="10.5" x2="18.5" y2="10.5" stroke="#3a3a3a" stroke-width="1.3"/></svg>
<div class="t" style="top:1108.00px;font-size:29.00px;line-height:29.00px;color:#000;left:271.50px;transform:scaleX(0.9750);transform-origin:0 0;">10600</div>
<svg class="r" style="left:455.50px;top:1110.25px;" width="21" height="21" viewBox="0 0 21 21"><rect x="0.7" y="0.7" width="19.6" height="19.6" fill="#fafafa" stroke="#3a3a3a" stroke-width="1.3"/><line x1="2.5" y1="10.5" x2="18.5" y2="10.5" stroke="#3a3a3a" stroke-width="1.3"/></svg>
<div class="t" style="top:1108.00px;font-size:29.00px;line-height:29.00px;color:#000;left:498.00px;width:311.00px;overflow:hidden;">Prepaid Insurance</div>
<div class="t" style="top:1108.00px;font-size:29.00px;line-height:29.00px;color:#000;left:815.00px;">Posting</div>
<div class="t" style="top:1108.00px;font-size:29.00px;line-height:29.00px;color:#000;left:1001.30px;width:300px;text-align:right;transform:scaleX(0.9550);transform-origin:100% 0;">0.00</div>
<div class="t" style="top:1108.00px;font-size:29.00px;line-height:29.00px;color:#000;left:1271.30px;width:300px;text-align:right;transform:scaleX(0.9550);transform-origin:100% 0;">0.00</div>
<div class="t" style="top:1108.00px;font-size:29.00px;line-height:29.00px;color:#000;left:1481.00px;width:300px;text-align:right;transform:scaleX(0.9550);transform-origin:100% 0;">0.00</div>
<div class="t" style="top:1108.00px;font-size:29.00px;line-height:29.00px;color:#000;left:1696.30px;width:300px;text-align:right;transform:scaleX(0.9550);transform-origin:100% 0;">0.00</div>
<div class="r" style="left:236.50px;top:1139.40px;width:1768.50px;height:2.00px;background:#d4d4d8;"></div>
<svg class="r" style="left:244.00px;top:1153.00px;" width="21" height="21" viewBox="0 0 21 21"><rect x="0.7" y="0.7" width="19.6" height="19.6" fill="#fafafa" stroke="#3a3a3a" stroke-width="1.3"/><line x1="2.5" y1="10.5" x2="18.5" y2="10.5" stroke="#3a3a3a" stroke-width="1.3"/></svg>
<div class="t" style="top:1150.75px;font-size:29.00px;line-height:29.00px;color:#000;left:271.50px;transform:scaleX(0.9750);transform-origin:0 0;">10700</div>
<svg class="r" style="left:455.50px;top:1153.00px;" width="21" height="21" viewBox="0 0 21 21"><rect x="0.7" y="0.7" width="19.6" height="19.6" fill="#fafafa" stroke="#3a3a3a" stroke-width="1.3"/><line x1="2.5" y1="10.5" x2="18.5" y2="10.5" stroke="#3a3a3a" stroke-width="1.3"/></svg>
<div class="t" style="top:1150.75px;font-size:29.00px;line-height:29.00px;color:#000;left:498.00px;width:311.00px;overflow:hidden;">Inventory</div>
<div class="t" style="top:1150.75px;font-size:29.00px;line-height:29.00px;color:#000;left:815.00px;">Posting</div>
<div class="t" style="top:1150.75px;font-size:29.00px;line-height:29.00px;color:#000;left:1001.30px;width:300px;text-align:right;transform:scaleX(0.9550);transform-origin:100% 0;">727,120.32</div>
<div class="t" style="top:1150.75px;font-size:29.00px;line-height:29.00px;color:#000;left:1271.30px;width:300px;text-align:right;transform:scaleX(0.9550);transform-origin:100% 0;">0.00</div>
<div class="t" style="top:1150.75px;font-size:29.00px;line-height:29.00px;color:#000;left:1481.00px;width:300px;text-align:right;transform:scaleX(0.9550);transform-origin:100% 0;">727,120.32</div>
<div class="t" style="top:1150.75px;font-size:29.00px;line-height:29.00px;color:#000;left:1696.30px;width:300px;text-align:right;transform:scaleX(0.9550);transform-origin:100% 0;">0.00</div>
<div class="r" style="left:236.50px;top:1182.15px;width:1768.50px;height:2.00px;background:#d4d4d8;"></div>
<svg class="r" style="left:244.00px;top:1195.75px;" width="21" height="21" viewBox="0 0 21 21"><rect x="0.7" y="0.7" width="19.6" height="19.6" fill="#fafafa" stroke="#3a3a3a" stroke-width="1.3"/><line x1="2.5" y1="10.5" x2="18.5" y2="10.5" stroke="#3a3a3a" stroke-width="1.3"/></svg>
<div class="t" style="top:1193.50px;font-size:29.00px;line-height:29.00px;color:#000;left:271.50px;transform:scaleX(0.9750);transform-origin:0 0;">10750</div>
<svg class="r" style="left:455.50px;top:1195.75px;" width="21" height="21" viewBox="0 0 21 21"><rect x="0.7" y="0.7" width="19.6" height="19.6" fill="#fafafa" stroke="#3a3a3a" stroke-width="1.3"/><line x1="2.5" y1="10.5" x2="18.5" y2="10.5" stroke="#3a3a3a" stroke-width="1.3"/></svg>
<div class="t" style="top:1193.50px;font-size:29.00px;line-height:29.00px;color:#000;left:498.00px;width:311.00px;overflow:hidden;">WIP Account, Finished goods</div>
<div class="t" style="top:1193.50px;font-size:29.00px;line-height:29.00px;color:#000;left:815.00px;">Posting</div>
<div class="t" style="top:1193.50px;font-size:29.00px;line-height:29.00px;color:#000;left:1001.30px;width:300px;text-align:right;transform:scaleX(0.9550);transform-origin:100% 0;">0.00</div>
<div class="t" style="top:1193.50px;font-size:29.00px;line-height:29.00px;color:#000;left:1271.30px;width:300px;text-align:right;transform:scaleX(0.9550);transform-origin:100% 0;">0.00</div>
<div class="t" style="top:1193.50px;font-size:29.00px;line-height:29.00px;color:#000;left:1481.00px;width:300px;text-align:right;transform:scaleX(0.9550);transform-origin:100% 0;">0.00</div>
<div class="t" style="top:1193.50px;font-size:29.00px;line-height:29.00px;color:#000;left:1696.30px;width:300px;text-align:right;transform:scaleX(0.9550);transform-origin:100% 0;">0.00</div>
<div class="r" style="left:236.50px;top:1224.90px;width:1768.50px;height:2.00px;background:#d4d4d8;"></div>
<svg class="r" style="left:244.00px;top:1238.50px;" width="21" height="21" viewBox="0 0 21 21"><rect x="0.7" y="0.7" width="19.6" height="19.6" fill="#fafafa" stroke="#3a3a3a" stroke-width="1.3"/><line x1="2.5" y1="10.5" x2="18.5" y2="10.5" stroke="#3a3a3a" stroke-width="1.3"/></svg>
<div class="t" style="top:1236.25px;font-size:29.00px;line-height:29.00px;color:#000;left:271.50px;transform:scaleX(0.9750);transform-origin:0 0;">10800</div>
<svg class="r" style="left:455.50px;top:1238.50px;" width="21" height="21" viewBox="0 0 21 21"><rect x="0.7" y="0.7" width="19.6" height="19.6" fill="#fafafa" stroke="#3a3a3a" stroke-width="1.3"/><line x1="2.5" y1="10.5" x2="18.5" y2="10.5" stroke="#3a3a3a" stroke-width="1.3"/></svg>
<div class="t" style="top:1236.25px;font-size:29.00px;line-height:29.00px;color:#000;left:498.00px;width:311.00px;overflow:hidden;">Equipment</div>
<div class="t" style="top:1236.25px;font-size:29.00px;line-height:29.00px;color:#000;left:815.00px;">Posting</div>
<div class="t" style="top:1236.25px;font-size:29.00px;line-height:29.00px;color:#000;left:1001.30px;width:300px;text-align:right;transform:scaleX(0.9550);transform-origin:100% 0;">1,859,200.00</div>
<div class="t" style="top:1236.25px;font-size:29.00px;line-height:29.00px;color:#000;left:1271.30px;width:300px;text-align:right;transform:scaleX(0.9550);transform-origin:100% 0;">0.00</div>
<div class="t" style="top:1236.25px;font-size:29.00px;line-height:29.00px;color:#000;left:1481.00px;width:300px;text-align:right;transform:scaleX(0.9550);transform-origin:100% 0;">1,859,200.00</div>
<div class="t" style="top:1236.25px;font-size:29.00px;line-height:29.00px;color:#000;left:1696.30px;width:300px;text-align:right;transform:scaleX(0.9550);transform-origin:100% 0;">0.00</div>
<div class="r" style="left:236.50px;top:1267.65px;width:1768.50px;height:2.00px;background:#d4d4d8;"></div>
<svg class="r" style="left:244.00px;top:1281.25px;" width="21" height="21" viewBox="0 0 21 21"><rect x="0.7" y="0.7" width="19.6" height="19.6" fill="#fafafa" stroke="#3a3a3a" stroke-width="1.3"/><line x1="2.5" y1="10.5" x2="18.5" y2="10.5" stroke="#3a3a3a" stroke-width="1.3"/></svg>
<div class="t" style="top:1279.00px;font-size:29.00px;line-height:29.00px;color:#000;left:271.50px;transform:scaleX(0.9750);transform-origin:0 0;">10900</div>
<svg class="r" style="left:455.50px;top:1281.25px;" width="21" height="21" viewBox="0 0 21 21"><rect x="0.7" y="0.7" width="19.6" height="19.6" fill="#fafafa" stroke="#3a3a3a" stroke-width="1.3"/><line x1="2.5" y1="10.5" x2="18.5" y2="10.5" stroke="#3a3a3a" stroke-width="1.3"/></svg>
<div class="t" style="top:1279.00px;font-size:29.00px;line-height:29.00px;color:#000;left:498.00px;width:311.00px;overflow:hidden;">Accumulated Depreciation</div>
<div class="t" style="top:1279.00px;font-size:29.00px;line-height:29.00px;color:#000;left:815.00px;">Posting</div>
<div class="t" style="top:1279.00px;font-size:29.00px;line-height:29.00px;color:#000;left:1001.30px;width:300px;text-align:right;transform:scaleX(0.9550);transform-origin:100% 0;">0.00</div>
<div class="t" style="top:1279.00px;font-size:29.00px;line-height:29.00px;color:#000;left:1271.30px;width:300px;text-align:right;transform:scaleX(0.9550);transform-origin:100% 0;">0.00</div>
<div class="t" style="top:1279.00px;font-size:29.00px;line-height:29.00px;color:#000;left:1481.00px;width:300px;text-align:right;transform:scaleX(0.9550);transform-origin:100% 0;">0.00</div>
<div class="t" style="top:1279.00px;font-size:29.00px;line-height:29.00px;color:#000;left:1696.30px;width:300px;text-align:right;transform:scaleX(0.9550);transform-origin:100% 0;">0.00</div>
<div class="r" style="left:236.50px;top:1310.40px;width:1768.50px;height:2.00px;background:#d4d4d8;"></div>
<svg class="r" style="left:244.00px;top:1324.00px;" width="21" height="21" viewBox="0 0 21 21"><rect x="0.7" y="0.7" width="19.6" height="19.6" fill="#fafafa" stroke="#3a3a3a" stroke-width="1.3"/><line x1="2.5" y1="10.5" x2="18.5" y2="10.5" stroke="#3a3a3a" stroke-width="1.3"/></svg>
<div class="t" style="top:1321.75px;font-size:29.00px;line-height:29.00px;color:#000;left:271.50px;transform:scaleX(0.9750);transform-origin:0 0;">10910</div>
<svg class="r" style="left:455.50px;top:1324.00px;" width="21" height="21" viewBox="0 0 21 21"><rect x="0.7" y="0.7" width="19.6" height="19.6" fill="#fafafa" stroke="#3a3a3a" stroke-width="1.3"/><line x1="2.5" y1="10.5" x2="18.5" y2="10.5" stroke="#3a3a3a" stroke-width="1.3"/></svg>
<div class="t" style="top:1321.75px;font-size:29.00px;line-height:29.00px;color:#000;left:498.00px;width:311.00px;overflow:hidden;">WIP Job Sales</div>
<div class="t" style="top:1321.75px;font-size:29.00px;line-height:29.00px;color:#000;left:815.00px;">Posting</div>
<div class="t" style="top:1321.75px;font-size:29.00px;line-height:29.00px;color:#000;left:1001.30px;width:300px;text-align:right;transform:scaleX(0.9550);transform-origin:100% 0;">0.00</div>
<div class="t" style="top:1321.75px;font-size:29.00px;line-height:29.00px;color:#000;left:1271.30px;width:300px;text-align:right;transform:scaleX(0.9550);transform-origin:100% 0;">0.00</div>
<div class="t" style="top:1321.75px;font-size:29.00px;line-height:29.00px;color:#000;left:1481.00px;width:300px;text-align:right;transform:scaleX(0.9550);transform-origin:100% 0;">0.00</div>
<div class="t" style="top:1321.75px;font-size:29.00px;line-height:29.00px;color:#000;left:1696.30px;width:300px;text-align:right;transform:scaleX(0.9550);transform-origin:100% 0;">0.00</div>
<div class="r" style="left:236.50px;top:1353.15px;width:1768.50px;height:2.00px;background:#d4d4d8;"></div>
<svg class="r" style="left:244.00px;top:1366.75px;" width="21" height="21" viewBox="0 0 21 21"><rect x="0.7" y="0.7" width="19.6" height="19.6" fill="#fafafa" stroke="#3a3a3a" stroke-width="1.3"/><line x1="2.5" y1="10.5" x2="18.5" y2="10.5" stroke="#3a3a3a" stroke-width="1.3"/></svg>
<div class="t" style="top:1364.50px;font-size:29.00px;line-height:29.00px;color:#000;left:271.50px;transform:scaleX(0.9750);transform-origin:0 0;">10920</div>
<svg class="r" style="left:455.50px;top:1366.75px;" width="21" height="21" viewBox="0 0 21 21"><rect x="0.7" y="0.7" width="19.6" height="19.6" fill="#fafafa" stroke="#3a3a3a" stroke-width="1.3"/><line x1="2.5" y1="10.5" x2="18.5" y2="10.5" stroke="#3a3a3a" stroke-width="1.3"/></svg>
<div class="t" style="top:1364.50px;font-size:29.00px;line-height:29.00px;color:#000;left:498.00px;width:311.00px;overflow:hidden;">Invoiced Job Sales</div>
<div class="t" style="top:1364.50px;font-size:29.00px;line-height:29.00px;color:#000;left:815.00px;">Posting</div>
<div class="t" style="top:1364.50px;font-size:29.00px;line-height:29.00px;color:#000;left:1001.30px;width:300px;text-align:right;transform:scaleX(0.9550);transform-origin:100% 0;">0.00</div>
<div class="t" style="top:1364.50px;font-size:29.00px;line-height:29.00px;color:#000;left:1271.30px;width:300px;text-align:right;transform:scaleX(0.9550);transform-origin:100% 0;">0.00</div>
<div class="t" style="top:1364.50px;font-size:29.00px;line-height:29.00px;color:#000;left:1481.00px;width:300px;text-align:right;transform:scaleX(0.9550);transform-origin:100% 0;">0.00</div>
<div class="t" style="top:1364.50px;font-size:29.00px;line-height:29.00px;color:#000;left:1696.30px;width:300px;text-align:right;transform:scaleX(0.9550);transform-origin:100% 0;">0.00</div>
<div class="r" style="left:236.50px;top:1395.90px;width:1768.50px;height:2.00px;background:#d4d4d8;"></div>
<svg class="r" style="left:244.00px;top:1409.50px;" width="21" height="21" viewBox="0 0 21 21"><rect x="0.7" y="0.7" width="19.6" height="19.6" fill="#fafafa" stroke="#3a3a3a" stroke-width="1.3"/><line x1="2.5" y1="10.5" x2="18.5" y2="10.5" stroke="#3a3a3a" stroke-width="1.3"/></svg>
<div class="t" style="top:1407.25px;font-size:29.00px;line-height:29.00px;color:#000;left:271.50px;transform:scaleX(0.9750);transform-origin:0 0;">10940</div>
<svg class="r" style="left:455.50px;top:1409.50px;" width="21" height="21" viewBox="0 0 21 21"><rect x="0.7" y="0.7" width="19.6" height="19.6" fill="#fafafa" stroke="#3a3a3a" stroke-width="1.3"/><line x1="2.5" y1="10.5" x2="18.5" y2="10.5" stroke="#3a3a3a" stroke-width="1.3"/></svg>
<div class="t" style="top:1407.25px;font-size:29.00px;line-height:29.00px;color:#000;left:498.00px;width:311.00px;overflow:hidden;">Accrued Job Costs</div>
<div class="t" style="top:1407.25px;font-size:29.00px;line-height:29.00px;color:#000;left:815.00px;">Posting</div>
<div class="t" style="top:1407.25px;font-size:29.00px;line-height:29.00px;color:#000;left:1001.30px;width:300px;text-align:right;transform:scaleX(0.9550);transform-origin:100% 0;">0.00</div>
<div class="t" style="top:1407.25px;font-size:29.00px;line-height:29.00px;color:#000;left:1271.30px;width:300px;text-align:right;transform:scaleX(0.9550);transform-origin:100% 0;">0.00</div>
<div class="t" style="top:1407.25px;font-size:29.00px;line-height:29.00px;color:#000;left:1481.00px;width:300px;text-align:right;transform:scaleX(0.9550);transform-origin:100% 0;">0.00</div>
<div class="t" style="top:1407.25px;font-size:29.00px;line-height:29.00px;color:#000;left:1696.30px;width:300px;text-align:right;transform:scaleX(0.9550);transform-origin:100% 0;">0.00</div>
<div class="r" style="left:236.50px;top:1438.65px;width:1768.50px;height:2.00px;background:#d4d4d8;"></div>
<svg class="r" style="left:244.00px;top:1452.25px;" width="21" height="21" viewBox="0 0 21 21"><rect x="0.7" y="0.7" width="19.6" height="19.6" fill="#fafafa" stroke="#3a3a3a" stroke-width="1.3"/><line x1="2.5" y1="10.5" x2="18.5" y2="10.5" stroke="#3a3a3a" stroke-width="1.3"/></svg>
<div class="t" style="top:1450.00px;font-size:29.00px;line-height:29.00px;color:#000;left:271.50px;transform:scaleX(0.9750);transform-origin:0 0;">10950</div>
<svg class="r" style="left:455.50px;top:1452.25px;" width="21" height="21" viewBox="0 0 21 21"><rect x="0.7" y="0.7" width="19.6" height="19.6" fill="#fafafa" stroke="#3a3a3a" stroke-width="1.3"/><line x1="2.5" y1="10.5" x2="18.5" y2="10.5" stroke="#3a3a3a" stroke-width="1.3"/></svg>
<div class="t" style="top:1450.00px;font-size:29.00px;line-height:29.00px;color:#000;left:498.00px;width:311.00px;overflow:hidden;">WIP Job Costs</div>
<div class="t" style="top:1450.00px;font-size:29.00px;line-height:29.00px;color:#000;left:815.00px;">Posting</div>
<div class="t" style="top:1450.00px;font-size:29.00px;line-height:29.00px;color:#000;left:1001.30px;width:300px;text-align:right;transform:scaleX(0.9550);transform-origin:100% 0;">0.00</div>
<div class="t" style="top:1450.00px;font-size:29.00px;line-height:29.00px;color:#000;left:1271.30px;width:300px;text-align:right;transform:scaleX(0.9550);transform-origin:100% 0;">0.00</div>
<div class="t" style="top:1450.00px;font-size:29.00px;line-height:29.00px;color:#000;left:1481.00px;width:300px;text-align:right;transform:scaleX(0.9550);transform-origin:100% 0;">0.00</div>
<div class="t" style="top:1450.00px;font-size:29.00px;line-height:29.00px;color:#000;left:1696.30px;width:300px;text-align:right;transform:scaleX(0.9550);transform-origin:100% 0;">0.00</div>
<div class="r" style="left:236.50px;top:1481.40px;width:1768.50px;height:2.00px;background:#d4d4d8;"></div>
<svg class="r" style="left:244.00px;top:1495.00px;" width="21" height="21" viewBox="0 0 21 21"><rect x="0.7" y="0.7" width="19.6" height="19.6" fill="#fafafa" stroke="#3a3a3a" stroke-width="1.3"/><line x1="2.5" y1="10.5" x2="18.5" y2="10.5" stroke="#3a3a3a" stroke-width="1.3"/></svg>
<div class="t" style="top:1492.75px;font-size:29.00px;line-height:29.00px;color:#000;left:271.50px;transform:scaleX(0.9750);transform-origin:0 0;">10990</div>
<svg class="r" style="left:455.50px;top:1495.00px;" width="21" height="21" viewBox="0 0 21 21"><rect x="0.7" y="0.7" width="19.6" height="19.6" fill="#fafafa" stroke="#3a3a3a" stroke-width="1.3"/><line x1="2.5" y1="10.5" x2="18.5" y2="10.5" stroke="#3a3a3a" stroke-width="1.3"/></svg>
<div class="t" style="top:1492.75px;font-size:29.00px;line-height:29.00px;color:#000;left:481.00px;width:372.73px;overflow:hidden;transform:scaleX(0.8800);transform-origin:0 0;">TOTAL ASSETS</div>
<div class="t" style="top:1492.75px;font-size:29.00px;line-height:29.00px;color:#000;left:815.00px;">End-Total</div>
<div class="t" style="top:1492.75px;font-size:29.00px;line-height:29.00px;color:#000;left:1001.30px;width:300px;text-align:right;transform:scaleX(0.9550);transform-origin:100% 0;">4,983,323.04</div>
<div class="t" style="top:1492.75px;font-size:29.00px;line-height:29.00px;color:#000;left:1271.30px;width:300px;text-align:right;transform:scaleX(0.9550);transform-origin:100% 0;">0.00</div>
<div class="t" style="top:1492.75px;font-size:29.00px;line-height:29.00px;color:#000;left:1481.00px;width:300px;text-align:right;transform:scaleX(0.9550);transform-origin:100% 0;">4,983,323.04</div>
<div class="t" style="top:1492.75px;font-size:29.00px;line-height:29.00px;color:#000;left:1696.30px;width:300px;text-align:right;transform:scaleX(0.9550);transform-origin:100% 0;">0.00</div>
<div class="r" style="left:236.50px;top:1524.15px;width:1768.50px;height:2.00px;background:#d4d4d8;"></div>
<svg class="r" style="left:244.00px;top:1537.75px;" width="21" height="21" viewBox="0 0 21 21"><rect x="0.7" y="0.7" width="19.6" height="19.6" fill="#fafafa" stroke="#3a3a3a" stroke-width="1.3"/><line x1="2.5" y1="10.5" x2="18.5" y2="10.5" stroke="#3a3a3a" stroke-width="1.3"/></svg>
<div class="t" style="top:1535.50px;font-size:29.00px;line-height:29.00px;color:#000;left:271.50px;transform:scaleX(0.9750);transform-origin:0 0;">14110</div>
<svg class="r" style="left:455.50px;top:1537.75px;" width="21" height="21" viewBox="0 0 21 21"><rect x="0.7" y="0.7" width="19.6" height="19.6" fill="#fafafa" stroke="#3a3a3a" stroke-width="1.3"/><line x1="2.5" y1="10.5" x2="18.5" y2="10.5" stroke="#3a3a3a" stroke-width="1.3"/></svg>
<div class="t" style="top:1535.50px;font-size:29.00px;line-height:29.00px;color:#000;left:481.00px;width:328.00px;overflow:hidden;">Raw Materials</div>
<div class="t" style="top:1535.50px;font-size:29.00px;line-height:29.00px;color:#000;left:815.00px;">Posting</div>
<div class="t" style="top:1535.50px;font-size:29.00px;line-height:29.00px;color:#000;left:1001.30px;width:300px;text-align:right;transform:scaleX(0.9550);transform-origin:100% 0;">0.00</div>
<div class="t" style="top:1535.50px;font-size:29.00px;line-height:29.00px;color:#000;left:1271.30px;width:300px;text-align:right;transform:scaleX(0.9550);transform-origin:100% 0;">0.00</div>
<div class="t" style="top:1535.50px;font-size:29.00px;line-height:29.00px;color:#000;left:1481.00px;width:300px;text-align:right;transform:scaleX(0.9550);transform-origin:100% 0;">0.00</div>
<div class="t" style="top:1535.50px;font-size:29.00px;line-height:29.00px;color:#000;left:1696.30px;width:300px;text-align:right;transform:scaleX(0.9550);transform-origin:100% 0;">0.00</div>
<div class="r" style="left:236.50px;top:1566.90px;width:1768.50px;height:2.00px;background:#d4d4d8;"></div>
<svg class="r" style="left:244.00px;top:1580.50px;" width="21" height="21" viewBox="0 0 21 21"><rect x="0.7" y="0.7" width="19.6" height="19.6" fill="#fafafa" stroke="#3a3a3a" stroke-width="1.3"/><line x1="2.5" y1="10.5" x2="18.5" y2="10.5" stroke="#3a3a3a" stroke-width="1.3"/></svg>
<div class="t" style="top:1578.25px;font-size:29.00px;line-height:29.00px;color:#000;left:271.50px;transform:scaleX(0.9750);transform-origin:0 0;">14140</div>
<svg class="r" style="left:455.50px;top:1580.50px;" width="21" height="21" viewBox="0 0 21 21"><rect x="0.7" y="0.7" width="19.6" height="19.6" fill="#fafafa" stroke="#3a3a3a" stroke-width="1.3"/><line x1="2.5" y1="10.5" x2="18.5" y2="10.5" stroke="#3a3a3a" stroke-width="1.3"/></svg>
<div class="t" style="top:1578.25px;font-size:29.00px;line-height:29.00px;color:#000;left:481.00px;width:328.00px;overflow:hidden;">Direct Cost Applied, Retail</div>
<div class="t" style="top:1578.25px;font-size:29.00px;line-height:29.00px;color:#000;left:815.00px;">Posting</div>
<div class="t" style="top:1578.25px;font-size:29.00px;line-height:29.00px;color:#000;left:1001.30px;width:300px;text-align:right;transform:scaleX(0.9550);transform-origin:100% 0;">0.00</div>
<div class="t" style="top:1578.25px;font-size:29.00px;line-height:29.00px;color:#000;left:1271.30px;width:300px;text-align:right;transform:scaleX(0.9550);transform-origin:100% 0;">0.00</div>
<div class="t" style="top:1578.25px;font-size:29.00px;line-height:29.00px;color:#000;left:1481.00px;width:300px;text-align:right;transform:scaleX(0.9550);transform-origin:100% 0;">0.00</div>
<div class="t" style="top:1578.25px;font-size:29.00px;line-height:29.00px;color:#000;left:1696.30px;width:300px;text-align:right;transform:scaleX(0.9550);transform-origin:100% 0;">0.00</div>
<div class="r" style="left:236.50px;top:1609.65px;width:1768.50px;height:2.00px;background:#d4d4d8;"></div>
<svg class="r" style="left:244.00px;top:1623.25px;" width="21" height="21" viewBox="0 0 21 21"><rect x="0.7" y="0.7" width="19.6" height="19.6" fill="#fafafa" stroke="#3a3a3a" stroke-width="1.3"/><line x1="2.5" y1="10.5" x2="18.5" y2="10.5" stroke="#3a3a3a" stroke-width="1.3"/></svg>
<div class="t" style="top:1621.00px;font-size:29.00px;line-height:29.00px;color:#000;left:271.50px;transform:scaleX(0.9750);transform-origin:0 0;">15110</div>
<svg class="r" style="left:455.50px;top:1623.25px;" width="21" height="21" viewBox="0 0 21 21"><rect x="0.7" y="0.7" width="19.6" height="19.6" fill="#fafafa" stroke="#3a3a3a" stroke-width="1.3"/><line x1="2.5" y1="10.5" x2="18.5" y2="10.5" stroke="#3a3a3a" stroke-width="1.3"/></svg>
<div class="t" style="top:1621.00px;font-size:29.00px;line-height:29.00px;color:#000;left:481.00px;width:328.00px;overflow:hidden;">Customers Domestic</div>
<div class="t" style="top:1621.00px;font-size:29.00px;line-height:29.00px;color:#000;left:815.00px;">Posting</div>
<div class="t" style="top:1621.00px;font-size:29.00px;line-height:29.00px;color:#000;left:1001.30px;width:300px;text-align:right;transform:scaleX(0.9550);transform-origin:100% 0;">0.00</div>
<div class="t" style="top:1621.00px;font-size:29.00px;line-height:29.00px;color:#000;left:1271.30px;width:300px;text-align:right;transform:scaleX(0.9550);transform-origin:100% 0;">0.00</div>
<div class="t" style="top:1621.00px;font-size:29.00px;line-height:29.00px;color:#000;left:1481.00px;width:300px;text-align:right;transform:scaleX(0.9550);transform-origin:100% 0;">0.00</div>
<div class="t" style="top:1621.00px;font-size:29.00px;line-height:29.00px;color:#000;left:1696.30px;width:300px;text-align:right;transform:scaleX(0.9550);transform-origin:100% 0;">0.00</div>
<div class="r" style="left:236.50px;top:1652.40px;width:1768.50px;height:2.00px;background:#d4d4d8;"></div>
<svg class="r" style="left:244.00px;top:1666.00px;" width="21" height="21" viewBox="0 0 21 21"><rect x="0.7" y="0.7" width="19.6" height="19.6" fill="#fafafa" stroke="#3a3a3a" stroke-width="1.3"/><line x1="2.5" y1="10.5" x2="18.5" y2="10.5" stroke="#3a3a3a" stroke-width="1.3"/></svg>
<div class="t" style="top:1663.75px;font-size:29.00px;line-height:29.00px;color:#000;left:271.50px;transform:scaleX(0.9750);transform-origin:0 0;">20001</div>
<svg class="r" style="left:455.50px;top:1666.00px;" width="21" height="21" viewBox="0 0 21 21"><rect x="0.7" y="0.7" width="19.6" height="19.6" fill="#fafafa" stroke="#3a3a3a" stroke-width="1.3"/><line x1="2.5" y1="10.5" x2="18.5" y2="10.5" stroke="#3a3a3a" stroke-width="1.3"/></svg>
<div class="t" style="top:1663.75px;font-size:29.00px;line-height:29.00px;color:#000;left:481.00px;width:372.73px;overflow:hidden;transform:scaleX(0.8800);transform-origin:0 0;">LIABILITIES</div>
<div class="t" style="top:1663.75px;font-size:29.00px;line-height:29.00px;color:#000;left:815.00px;">Begin-Total</div>
<div class="t" style="top:1663.75px;font-size:29.00px;line-height:29.00px;color:#000;left:1001.30px;width:300px;text-align:right;transform:scaleX(0.9550);transform-origin:100% 0;">0.00</div>
<div class="t" style="top:1663.75px;font-size:29.00px;line-height:29.00px;color:#000;left:1271.30px;width:300px;text-align:right;transform:scaleX(0.9550);transform-origin:100% 0;">0.00</div>
<div class="t" style="top:1663.75px;font-size:29.00px;line-height:29.00px;color:#000;left:1481.00px;width:300px;text-align:right;transform:scaleX(0.9550);transform-origin:100% 0;">0.00</div>
<div class="t" style="top:1663.75px;font-size:29.00px;line-height:29.00px;color:#000;left:1696.30px;width:300px;text-align:right;transform:scaleX(0.9550);transform-origin:100% 0;">0.00</div>
<div class="r" style="left:236.50px;top:1695.15px;width:1768.50px;height:2.00px;background:#d4d4d8;"></div>
<svg class="r" style="left:244.00px;top:1708.75px;" width="21" height="21" viewBox="0 0 21 21"><rect x="0.7" y="0.7" width="19.6" height="19.6" fill="#fafafa" stroke="#3a3a3a" stroke-width="1.3"/><line x1="2.5" y1="10.5" x2="18.5" y2="10.5" stroke="#3a3a3a" stroke-width="1.3"/></svg>
<div class="t" style="top:1706.50px;font-size:29.00px;line-height:29.00px;color:#000;left:271.50px;transform:scaleX(0.9750);transform-origin:0 0;">20100</div>
<svg class="r" style="left:455.50px;top:1708.75px;" width="21" height="21" viewBox="0 0 21 21"><rect x="0.7" y="0.7" width="19.6" height="19.6" fill="#fafafa" stroke="#3a3a3a" stroke-width="1.3"/><line x1="2.5" y1="10.5" x2="18.5" y2="10.5" stroke="#3a3a3a" stroke-width="1.3"/></svg>
<div class="t" style="top:1706.50px;font-size:29.00px;line-height:29.00px;color:#000;left:498.00px;width:311.00px;overflow:hidden;">Accounts Payable</div>
<div class="t" style="top:1706.50px;font-size:29.00px;line-height:29.00px;color:#000;left:815.00px;">Posting</div>
<div class="t" style="top:1706.50px;font-size:29.00px;line-height:29.00px;color:#000;left:1001.30px;width:300px;text-align:right;transform:scaleX(0.9550);transform-origin:100% 0;">0.00</div>
<div class="t" style="top:1706.50px;font-size:29.00px;line-height:29.00px;color:#000;left:1271.30px;width:300px;text-align:right;transform:scaleX(0.9550);transform-origin:100% 0;">990,777.76</div>
<div class="t" style="top:1706.50px;font-size:29.00px;line-height:29.00px;color:#000;left:1481.00px;width:300px;text-align:right;transform:scaleX(0.9550);transform-origin:100% 0;">0.00</div>
<div class="t" style="top:1706.50px;font-size:29.00px;line-height:29.00px;color:#000;left:1696.30px;width:300px;text-align:right;transform:scaleX(0.9550);transform-origin:100% 0;">990,777.76</div>
<div class="r" style="left:236.50px;top:1737.90px;width:1768.50px;height:2.00px;background:#d4d4d8;"></div>
<svg class="r" style="left:244.00px;top:1751.50px;" width="21" height="21" viewBox="0 0 21 21"><rect x="0.7" y="0.7" width="19.6" height="19.6" fill="#fafafa" stroke="#3a3a3a" stroke-width="1.3"/><line x1="2.5" y1="10.5" x2="18.5" y2="10.5" stroke="#3a3a3a" stroke-width="1.3"/></svg>
<div class="t" style="top:1749.25px;font-size:29.00px;line-height:29.00px;color:#000;left:271.50px;transform:scaleX(0.9750);transform-origin:0 0;">20200</div>
<svg class="r" style="left:455.50px;top:1751.50px;" width="21" height="21" viewBox="0 0 21 21"><rect x="0.7" y="0.7" width="19.6" height="19.6" fill="#fafafa" stroke="#3a3a3a" stroke-width="1.3"/><line x1="2.5" y1="10.5" x2="18.5" y2="10.5" stroke="#3a3a3a" stroke-width="1.3"/></svg>
<div class="t" style="top:1749.25px;font-size:29.00px;line-height:29.00px;color:#000;left:498.00px;width:311.00px;overflow:hidden;">Purchase Discounts</div>
<div class="t" style="top:1749.25px;font-size:29.00px;line-height:29.00px;color:#000;left:815.00px;">Posting</div>
<div class="t" style="top:1749.25px;font-size:29.00px;line-height:29.00px;color:#000;left:1001.30px;width:300px;text-align:right;transform:scaleX(0.9550);transform-origin:100% 0;">0.00</div>
<div class="t" style="top:1749.25px;font-size:29.00px;line-height:29.00px;color:#000;left:1271.30px;width:300px;text-align:right;transform:scaleX(0.9550);transform-origin:100% 0;">0.00</div>
<div class="t" style="top:1749.25px;font-size:29.00px;line-height:29.00px;color:#000;left:1481.00px;width:300px;text-align:right;transform:scaleX(0.9550);transform-origin:100% 0;">0.00</div>
<div class="t" style="top:1749.25px;font-size:29.00px;line-height:29.00px;color:#000;left:1696.30px;width:300px;text-align:right;transform:scaleX(0.9550);transform-origin:100% 0;">0.00</div>
<div class="r" style="left:236.50px;top:1780.65px;width:1768.50px;height:2.00px;background:#d4d4d8;"></div>
<svg class="r" style="left:244.00px;top:1794.25px;" width="21" height="21" viewBox="0 0 21 21"><rect x="0.7" y="0.7" width="19.6" height="19.6" fill="#fafafa" stroke="#3a3a3a" stroke-width="1.3"/><line x1="2.5" y1="10.5" x2="18.5" y2="10.5" stroke="#3a3a3a" stroke-width="1.3"/></svg>
<div class="t" style="top:1792.00px;font-size:29.00px;line-height:29.00px;color:#000;left:271.50px;transform:scaleX(0.9750);transform-origin:0 0;">20300</div>
<svg class="r" style="left:455.50px;top:1794.25px;" width="21" height="21" viewBox="0 0 21 21"><rect x="0.7" y="0.7" width="19.6" height="19.6" fill="#fafafa" stroke="#3a3a3a" stroke-width="1.3"/><line x1="2.5" y1="10.5" x2="18.5" y2="10.5" stroke="#3a3a3a" stroke-width="1.3"/></svg>
<div class="t" style="top:1792.00px;font-size:29.00px;line-height:29.00px;color:#000;left:498.00px;width:311.00px;overflow:hidden;">Purchase Returns &amp; Allowances</div>
<div class="t" style="top:1792.00px;font-size:29.00px;line-height:29.00px;color:#000;left:815.00px;">Posting</div>
<div class="t" style="top:1792.00px;font-size:29.00px;line-height:29.00px;color:#000;left:1001.30px;width:300px;text-align:right;transform:scaleX(0.9550);transform-origin:100% 0;">0.00</div>
<div class="t" style="top:1792.00px;font-size:29.00px;line-height:29.00px;color:#000;left:1271.30px;width:300px;text-align:right;transform:scaleX(0.9550);transform-origin:100% 0;">0.00</div>
<div class="t" style="top:1792.00px;font-size:29.00px;line-height:29.00px;color:#000;left:1481.00px;width:300px;text-align:right;transform:scaleX(0.9550);transform-origin:100% 0;">0.00</div>
<div class="t" style="top:1792.00px;font-size:29.00px;line-height:29.00px;color:#000;left:1696.30px;width:300px;text-align:right;transform:scaleX(0.9550);transform-origin:100% 0;">0.00</div>
<div class="r" style="left:236.50px;top:1823.40px;width:1768.50px;height:2.00px;background:#d4d4d8;"></div>
<svg class="r" style="left:244.00px;top:1837.00px;" width="21" height="21" viewBox="0 0 21 21"><rect x="0.7" y="0.7" width="19.6" height="19.6" fill="#fafafa" stroke="#3a3a3a" stroke-width="1.3"/><line x1="2.5" y1="10.5" x2="18.5" y2="10.5" stroke="#3a3a3a" stroke-width="1.3"/></svg>
<div class="t" style="top:1834.75px;font-size:29.00px;line-height:29.00px;color:#000;left:271.50px;transform:scaleX(0.9750);transform-origin:0 0;">20400</div>
<svg class="r" style="left:455.50px;top:1837.00px;" width="21" height="21" viewBox="0 0 21 21"><rect x="0.7" y="0.7" width="19.6" height="19.6" fill="#fafafa" stroke="#3a3a3a" stroke-width="1.3"/><line x1="2.5" y1="10.5" x2="18.5" y2="10.5" stroke="#3a3a3a" stroke-width="1.3"/></svg>
<div class="t" style="top:1834.75px;font-size:29.00px;line-height:29.00px;color:#000;left:498.00px;width:311.00px;overflow:hidden;">Deferred Revenue</div>
<div class="t" style="top:1834.75px;font-size:29.00px;line-height:29.00px;color:#000;left:815.00px;">Posting</div>
<div class="t" style="top:1834.75px;font-size:29.00px;line-height:29.00px;color:#000;left:1001.30px;width:300px;text-align:right;transform:scaleX(0.9550);transform-origin:100% 0;">0.00</div>
<div class="t" style="top:1834.75px;font-size:29.00px;line-height:29.00px;color:#000;left:1271.30px;width:300px;text-align:right;transform:scaleX(0.9550);transform-origin:100% 0;">0.00</div>
<div class="t" style="top:1834.75px;font-size:29.00px;line-height:29.00px;color:#000;left:1481.00px;width:300px;text-align:right;transform:scaleX(0.9550);transform-origin:100% 0;">0.00</div>
<div class="t" style="top:1834.75px;font-size:29.00px;line-height:29.00px;color:#000;left:1696.30px;width:300px;text-align:right;transform:scaleX(0.9550);transform-origin:100% 0;">0.00</div>
<div class="r" style="left:236.50px;top:1866.15px;width:1768.50px;height:2.00px;background:#d4d4d8;"></div>
<svg class="r" style="left:244.00px;top:1879.75px;" width="21" height="21" viewBox="0 0 21 21"><rect x="0.7" y="0.7" width="19.6" height="19.6" fill="#fafafa" stroke="#3a3a3a" stroke-width="1.3"/><line x1="2.5" y1="10.5" x2="18.5" y2="10.5" stroke="#3a3a3a" stroke-width="1.3"/></svg>
<div class="t" style="top:1877.50px;font-size:29.00px;line-height:29.00px;color:#000;left:271.50px;transform:scaleX(0.9750);transform-origin:0 0;">20500</div>
<svg class="r" style="left:455.50px;top:1879.75px;" width="21" height="21" viewBox="0 0 21 21"><rect x="0.7" y="0.7" width="19.6" height="19.6" fill="#fafafa" stroke="#3a3a3a" stroke-width="1.3"/><line x1="2.5" y1="10.5" x2="18.5" y2="10.5" stroke="#3a3a3a" stroke-width="1.3"/></svg>
<div class="t" style="top:1877.50px;font-size:29.00px;line-height:29.00px;color:#000;left:498.00px;width:311.00px;overflow:hidden;">Credit Cards</div>
<div class="t" style="top:1877.50px;font-size:29.00px;line-height:29.00px;color:#000;left:815.00px;">Posting</div>
<div class="t" style="top:1877.50px;font-size:29.00px;line-height:29.00px;color:#000;left:1001.30px;width:300px;text-align:right;transform:scaleX(0.9550);transform-origin:100% 0;">0.00</div>
<div class="t" style="top:1877.50px;font-size:29.00px;line-height:29.00px;color:#000;left:1271.30px;width:300px;text-align:right;transform:scaleX(0.9550);transform-origin:100% 0;">0.00</div>
<div class="t" style="top:1877.50px;font-size:29.00px;line-height:29.00px;color:#000;left:1481.00px;width:300px;text-align:right;transform:scaleX(0.9550);transform-origin:100% 0;">0.00</div>
<div class="t" style="top:1877.50px;font-size:29.00px;line-height:29.00px;color:#000;left:1696.30px;width:300px;text-align:right;transform:scaleX(0.9550);transform-origin:100% 0;">0.00</div>
<div class="r" style="left:236.50px;top:1908.90px;width:1768.50px;height:2.00px;background:#d4d4d8;"></div>
<svg class="r" style="left:244.00px;top:1922.50px;" width="21" height="21" viewBox="0 0 21 21"><rect x="0.7" y="0.7" width="19.6" height="19.6" fill="#fafafa" stroke="#3a3a3a" stroke-width="1.3"/><line x1="2.5" y1="10.5" x2="18.5" y2="10.5" stroke="#3a3a3a" stroke-width="1.3"/></svg>
<div class="t" style="top:1920.25px;font-size:29.00px;line-height:29.00px;color:#000;left:271.50px;transform:scaleX(0.9750);transform-origin:0 0;">20600</div>
<svg class="r" style="left:455.50px;top:1922.50px;" width="21" height="21" viewBox="0 0 21 21"><rect x="0.7" y="0.7" width="19.6" height="19.6" fill="#fafafa" stroke="#3a3a3a" stroke-width="1.3"/><line x1="2.5" y1="10.5" x2="18.5" y2="10.5" stroke="#3a3a3a" stroke-width="1.3"/></svg>
<div class="t" style="top:1920.25px;font-size:29.00px;line-height:29.00px;color:#000;left:498.00px;width:311.00px;overflow:hidden;">Sales Tax Payable</div>
<div class="t" style="top:1920.25px;font-size:29.00px;line-height:29.00px;color:#000;left:815.00px;">Posting</div>
<div class="t" style="top:1920.25px;font-size:29.00px;line-height:29.00px;color:#000;left:1001.30px;width:300px;text-align:right;transform:scaleX(0.9550);transform-origin:100% 0;">0.00</div>
<div class="t" style="top:1920.25px;font-size:29.00px;line-height:29.00px;color:#000;left:1271.30px;width:300px;text-align:right;transform:scaleX(0.9550);transform-origin:100% 0;">159,539.20</div>
<div class="t" style="top:1920.25px;font-size:29.00px;line-height:29.00px;color:#000;left:1481.00px;width:300px;text-align:right;transform:scaleX(0.9550);transform-origin:100% 0;">0.00</div>
<div class="t" style="top:1920.25px;font-size:29.00px;line-height:29.00px;color:#000;left:1696.30px;width:300px;text-align:right;transform:scaleX(0.9550);transform-origin:100% 0;">159,539.20</div>
<div class="r" style="left:236.50px;top:1951.65px;width:1768.50px;height:2.00px;background:#d4d4d8;"></div>
<svg class="r" style="left:244.00px;top:1965.25px;" width="21" height="21" viewBox="0 0 21 21"><rect x="0.7" y="0.7" width="19.6" height="19.6" fill="#fafafa" stroke="#3a3a3a" stroke-width="1.3"/><line x1="2.5" y1="10.5" x2="18.5" y2="10.5" stroke="#3a3a3a" stroke-width="1.3"/></svg>
<div class="t" style="top:1963.00px;font-size:29.00px;line-height:29.00px;color:#000;left:271.50px;transform:scaleX(0.9750);transform-origin:0 0;">20700</div>
<svg class="r" style="left:455.50px;top:1965.25px;" width="21" height="21" viewBox="0 0 21 21"><rect x="0.7" y="0.7" width="19.6" height="19.6" fill="#fafafa" stroke="#3a3a3a" stroke-width="1.3"/><line x1="2.5" y1="10.5" x2="18.5" y2="10.5" stroke="#3a3a3a" stroke-width="1.3"/></svg>
<div class="t" style="top:1963.00px;font-size:29.00px;line-height:29.00px;color:#000;left:498.00px;width:311.00px;overflow:hidden;">Accrued Salaries &amp; Wages</div>
<div class="t" style="top:1963.00px;font-size:29.00px;line-height:29.00px;color:#000;left:815.00px;">Posting</div>
<div class="t" style="top:1963.00px;font-size:29.00px;line-height:29.00px;color:#000;left:1001.30px;width:300px;text-align:right;transform:scaleX(0.9550);transform-origin:100% 0;">0.00</div>
<div class="t" style="top:1963.00px;font-size:29.00px;line-height:29.00px;color:#000;left:1271.30px;width:300px;text-align:right;transform:scaleX(0.9550);transform-origin:100% 0;">0.00</div>
<div class="t" style="top:1963.00px;font-size:29.00px;line-height:29.00px;color:#000;left:1481.00px;width:300px;text-align:right;transform:scaleX(0.9550);transform-origin:100% 0;">0.00</div>
<div class="t" style="top:1963.00px;font-size:29.00px;line-height:29.00px;color:#000;left:1696.30px;width:300px;text-align:right;transform:scaleX(0.9550);transform-origin:100% 0;">0.00</div>
<div class="r" style="left:236.50px;top:1994.40px;width:1768.50px;height:2.00px;background:#d4d4d8;"></div>
<svg class="r" style="left:244.00px;top:2008.00px;" width="21" height="21" viewBox="0 0 21 21"><rect x="0.7" y="0.7" width="19.6" height="19.6" fill="#fafafa" stroke="#3a3a3a" stroke-width="1.3"/><line x1="2.5" y1="10.5" x2="18.5" y2="10.5" stroke="#3a3a3a" stroke-width="1.3"/></svg>
<div class="t" style="top:2005.75px;font-size:29.00px;line-height:29.00px;color:#000;left:271.50px;transform:scaleX(0.9750);transform-origin:0 0;">20800</div>
<svg class="r" style="left:455.50px;top:2008.00px;" width="21" height="21" viewBox="0 0 21 21"><rect x="0.7" y="0.7" width="19.6" height="19.6" fill="#fafafa" stroke="#3a3a3a" stroke-width="1.3"/><line x1="2.5" y1="10.5" x2="18.5" y2="10.5" stroke="#3a3a3a" stroke-width="1.3"/></svg>
<div class="t" style="top:2005.75px;font-size:29.00px;line-height:29.00px;color:#000;left:498.00px;width:311.00px;overflow:hidden;">Federal Withholding Payable</div>
<div class="t" style="top:2005.75px;font-size:29.00px;line-height:29.00px;color:#000;left:815.00px;">Posting</div>
<div class="t" style="top:2005.75px;font-size:29.00px;line-height:29.00px;color:#000;left:1001.30px;width:300px;text-align:right;transform:scaleX(0.9550);transform-origin:100% 0;">0.00</div>
<div class="t" style="top:2005.75px;font-size:29.00px;line-height:29.00px;color:#000;left:1271.30px;width:300px;text-align:right;transform:scaleX(0.9550);transform-origin:100% 0;">0.00</div>
<div class="t" style="top:2005.75px;font-size:29.00px;line-height:29.00px;color:#000;left:1481.00px;width:300px;text-align:right;transform:scaleX(0.9550);transform-origin:100% 0;">0.00</div>
<div class="t" style="top:2005.75px;font-size:29.00px;line-height:29.00px;color:#000;left:1696.30px;width:300px;text-align:right;transform:scaleX(0.9550);transform-origin:100% 0;">0.00</div>
<div class="r" style="left:236.50px;top:2037.15px;width:1768.50px;height:2.00px;background:#d4d4d8;"></div>
<div class="r" style="left:2184.40px;top:756.20px;width:431.80px;height:595.50px;background:#ffffff;border:2px solid #a6a6a6;box-sizing:border-box;"></div>
<div class="r" style="left:2184.40px;top:825.70px;width:431.80px;height:1.80px;background:#a6a6a6;"></div>
<div class="t" style="top:776.50px;font-size:36.03px;line-height:36.03px;color:#252525;-webkit-text-stroke:1.0px #252525;left:2207.10px;transform:scaleX(1.0126);transform-origin:0 0;">Department Code</div>
<svg class="r" style="left:2500.20px;top:776.20px;" width="36" height="36" viewBox="0 0 36 36"><g fill="none" stroke-linecap="round" stroke-linejoin="round"><path d="M1.5 5 L4.5 8.5 L10.5 1.5 M1.5 16.5 L4.5 20 L10.5 13 M1.5 28 L4.5 31.5 L10.5 24.5" stroke="#6a6a6a" stroke-width="1.9"/><path d="M15.5 5.2 H32 M15.5 16.6 H32 M15.5 28.3 H32" stroke="#5a5a5a" stroke-width="1.9"/></g></svg>
<svg class="r" style="left:2557.20px;top:776.20px;" width="36" height="36" viewBox="0 0 36 36"><path d="M1 1 H26 L16 12 V24 L12 22 V12 Z" fill="#c9c9c9"/><path d="M15 19 L31 35 M31 19 L15 35" stroke="#f2c3b5" stroke-width="2"/></svg>
<div class="r" style="left:2206.20px;top:838.60px;width:387.60px;height:54.80px;background:#8cd1db;border:2px solid #a2a2a2;box-sizing:border-box;"></div>
<div class="t" style="top:851.34px;font-size:29.61px;line-height:29.61px;color:#252525;-webkit-text-stroke:1.0px #252525;left:2222.40px;transform:scaleX(1.0335);transform-origin:0 0;">ADM</div>
<div class="r" style="left:2206.20px;top:900.55px;width:387.60px;height:54.80px;background:#8cd1db;border:2px solid #a2a2a2;box-sizing:border-box;"></div>
<div class="t" style="top:913.29px;font-size:29.61px;line-height:29.61px;color:#252525;-webkit-text-stroke:1.0px #252525;left:2222.40px;transform:scaleX(0.9681);transform-origin:0 0;">BLANK</div>
<div class="r" style="left:2206.20px;top:962.50px;width:387.60px;height:54.80px;background:#8cd1db;border:2px solid #a2a2a2;box-sizing:border-box;"></div>
<div class="t" style="top:975.24px;font-size:29.61px;line-height:29.61px;color:#252525;-webkit-text-stroke:1.0px #252525;left:2222.40px;transform:scaleX(0.9235);transform-origin:0 0;">PROD</div>
<div class="r" style="left:2206.20px;top:1024.45px;width:387.60px;height:54.80px;background:#8cd1db;border:2px solid #a2a2a2;box-sizing:border-box;"></div>
<div class="t" style="top:1037.19px;font-size:29.61px;line-height:29.61px;color:#252525;-webkit-text-stroke:1.0px #252525;left:2222.40px;transform:scaleX(0.8589);transform-origin:0 0;">SALES</div>
<div class="r" style="left:2621.70px;top:756.20px;width:431.80px;height:595.50px;background:#ffffff;border:2px solid #a6a6a6;box-sizing:border-box;"></div>
<div class="r" style="left:2621.70px;top:825.70px;width:431.80px;height:1.80px;background:#a6a6a6;"></div>
<div class="t" style="top:776.50px;font-size:36.03px;line-height:36.03px;color:#252525;-webkit-text-stroke:1.0px #252525;left:2644.40px;transform:scaleX(1.0166);transform-origin:0 0;">Customergroup...</div>
<svg class="r" style="left:2937.50px;top:776.20px;" width="36" height="36" viewBox="0 0 36 36"><g fill="none" stroke-linecap="round" stroke-linejoin="round"><path d="M1.5 5 L4.5 8.5 L10.5 1.5 M1.5 16.5 L4.5 20 L10.5 13 M1.5 28 L4.5 31.5 L10.5 24.5" stroke="#6a6a6a" stroke-width="1.9"/><path d="M15.5 5.2 H32 M15.5 16.6 H32 M15.5 28.3 H32" stroke="#5a5a5a" stroke-width="1.9"/></g></svg>
<svg class="r" style="left:2994.50px;top:776.20px;" width="36" height="36" viewBox="0 0 36 36"><path d="M1 1 H26 L16 12 V24 L12 22 V12 Z" fill="#c9c9c9"/><path d="M15 19 L31 35 M31 19 L15 35" stroke="#f2c3b5" stroke-width="2"/></svg>
<div class="r" style="left:2643.70px;top:838.60px;width:387.60px;height:54.80px;background:#8cd1db;border:2px solid #a2a2a2;box-sizing:border-box;"></div>
<div class="t" style="top:851.34px;font-size:29.61px;line-height:29.61px;color:#252525;-webkit-text-stroke:1.0px #252525;left:2659.90px;transform:scaleX(0.9681);transform-origin:0 0;">BLANK</div>
<div class="r" style="left:2643.70px;top:900.55px;width:387.60px;height:54.80px;background:#8cd1db;border:2px solid #a2a2a2;box-sizing:border-box;"></div>
<div class="t" style="top:913.29px;font-size:29.61px;line-height:29.61px;color:#252525;-webkit-text-stroke:1.0px #252525;left:2659.90px;transform:scaleX(0.8826);transform-origin:0 0;">LARGE</div>
<div class="r" style="left:2643.70px;top:962.50px;width:387.60px;height:54.80px;background:#8cd1db;border:2px solid #a2a2a2;box-sizing:border-box;"></div>
<div class="t" style="top:975.24px;font-size:29.61px;line-height:29.61px;color:#252525;-webkit-text-stroke:1.0px #252525;left:2659.90px;transform:scaleX(0.9994);transform-origin:0 0;">MEDIUM</div>
<div class="r" style="left:2643.70px;top:1024.45px;width:387.60px;height:54.80px;background:#8cd1db;border:2px solid #a2a2a2;box-sizing:border-box;"></div>
<div class="t" style="top:1037.19px;font-size:29.61px;line-height:29.61px;color:#252525;-webkit-text-stroke:1.0px #252525;left:2659.90px;transform:scaleX(0.9475);transform-origin:0 0;">SMALL</div>
<div class="r" style="left:2184.40px;top:1357.30px;width:431.80px;height:595.20px;background:#ffffff;border:2px solid #a6a6a6;box-sizing:border-box;"></div>
<div class="r" style="left:2184.40px;top:1426.80px;width:431.80px;height:1.80px;background:#a6a6a6;"></div>
<div class="t" style="top:1377.60px;font-size:36.03px;line-height:36.03px;color:#252525;-webkit-text-stroke:1.0px #252525;left:2207.10px;transform:scaleX(1.0212);transform-origin:0 0;">Account Category</div>
<svg class="r" style="left:2500.20px;top:1377.30px;" width="36" height="36" viewBox="0 0 36 36"><g fill="none" stroke-linecap="round" stroke-linejoin="round"><path d="M1.5 5 L4.5 8.5 L10.5 1.5 M1.5 16.5 L4.5 20 L10.5 13 M1.5 28 L4.5 31.5 L10.5 24.5" stroke="#6a6a6a" stroke-width="1.9"/><path d="M15.5 5.2 H32 M15.5 16.6 H32 M15.5 28.3 H32" stroke="#5a5a5a" stroke-width="1.9"/></g></svg>
<svg class="r" style="left:2557.20px;top:1377.30px;" width="36" height="36" viewBox="0 0 36 36"><path d="M1 1 H26 L16 12 V24 L12 22 V12 Z" fill="#c9c9c9"/><path d="M15 19 L31 35 M31 19 L15 35" stroke="#f2c3b5" stroke-width="2"/></svg>
<div class="r" style="left:2206.20px;top:1439.40px;width:387.60px;height:54.80px;background:#8cd1db;border:2px solid #a2a2a2;box-sizing:border-box;"></div>
<div class="r" style="left:2206.20px;top:1501.28px;width:387.60px;height:54.80px;background:#8cd1db;border:2px solid #a2a2a2;box-sizing:border-box;"></div>
<div class="t" style="top:1514.02px;font-size:29.61px;line-height:29.61px;color:#252525;-webkit-text-stroke:1.0px #252525;left:2222.40px;transform:scaleX(0.9453);transform-origin:0 0;">Assets</div>
<div class="r" style="left:2206.20px;top:1563.16px;width:387.60px;height:54.80px;background:#8cd1db;border:2px solid #a2a2a2;box-sizing:border-box;"></div>
<div class="t" style="top:1575.90px;font-size:29.61px;line-height:29.61px;color:#252525;-webkit-text-stroke:1.0px #252525;left:2222.40px;transform:scaleX(1.0068);transform-origin:0 0;">Cost of Goods Sold</div>
<div class="r" style="left:2206.20px;top:1625.04px;width:387.60px;height:54.80px;background:#8cd1db;border:2px solid #a2a2a2;box-sizing:border-box;"></div>
<div class="t" style="top:1637.78px;font-size:29.61px;line-height:29.61px;color:#252525;-webkit-text-stroke:1.0px #252525;left:2222.40px;transform:scaleX(0.9459);transform-origin:0 0;">Expense</div>
<div class="r" style="left:2206.20px;top:1686.92px;width:387.60px;height:54.80px;background:#8cd1db;border:2px solid #a2a2a2;box-sizing:border-box;"></div>
<div class="t" style="top:1699.66px;font-size:29.61px;line-height:29.61px;color:#252525;-webkit-text-stroke:1.0px #252525;left:2222.40px;transform:scaleX(1.0196);transform-origin:0 0;">Income</div>
<div class="r" style="left:2206.20px;top:1748.80px;width:387.60px;height:54.80px;background:#8cd1db;border:2px solid #a2a2a2;box-sizing:border-box;"></div>
<div class="t" style="top:1761.54px;font-size:29.61px;line-height:29.61px;color:#252525;-webkit-text-stroke:1.0px #252525;left:2222.40px;transform:scaleX(1.0263);transform-origin:0 0;">Liabilities</div>
<div class="r" style="left:2206.20px;top:1810.68px;width:387.60px;height:54.80px;background:#8cd1db;border:2px solid #a2a2a2;box-sizing:border-box;"></div>
<div class="t" style="top:1823.42px;font-size:29.61px;line-height:29.61px;color:#252525;-webkit-text-stroke:1.0px #252525;left:2222.40px;transform:scaleX(1.0211);transform-origin:0 0;">Net Asset</div>
<div class="r" style="left:2621.70px;top:1357.30px;width:431.80px;height:595.20px;background:#ffffff;border:2px solid #a6a6a6;box-sizing:border-box;"></div>
<div class="r" style="left:2621.70px;top:1426.80px;width:431.80px;height:1.80px;background:#a6a6a6;"></div>
<div class="t" style="top:1377.60px;font-size:36.03px;line-height:36.03px;color:#252525;-webkit-text-stroke:1.0px #252525;left:2644.40px;transform:scaleX(0.9985);transform-origin:0 0;">Account Subcat...</div>
<svg class="r" style="left:2937.50px;top:1377.30px;" width="36" height="36" viewBox="0 0 36 36"><g fill="none" stroke-linecap="round" stroke-linejoin="round"><path d="M1.5 5 L4.5 8.5 L10.5 1.5 M1.5 16.5 L4.5 20 L10.5 13 M1.5 28 L4.5 31.5 L10.5 24.5" stroke="#6a6a6a" stroke-width="1.9"/><path d="M15.5 5.2 H32 M15.5 16.6 H32 M15.5 28.3 H32" stroke="#5a5a5a" stroke-width="1.9"/></g></svg>
<svg class="r" style="left:2994.50px;top:1377.30px;" width="36" height="36" viewBox="0 0 36 36"><path d="M1 1 H26 L16 12 V24 L12 22 V12 Z" fill="#c9c9c9"/><path d="M15 19 L31 35 M31 19 L15 35" stroke="#f2c3b5" stroke-width="2"/></svg>
<div class="r" style="left:2630px;top:1434px;width:376px;height:503.6px;overflow:hidden;">
<div class="r" style="left:13.70px;top:1.40px;width:356.30px;height:54.50px;background:#8cd1db;border:2px solid #a2a2a2;box-sizing:border-box;"></div>
<div class="t" style="top:14.14px;font-size:29.61px;line-height:29.61px;color:#252525;-webkit-text-stroke:1.0px #252525;left:29.00px;transform:scaleX(0.9971);transform-origin:0 0;">Accounts Receivable</div>
<div class="r" style="left:13.70px;top:63.17px;width:356.30px;height:54.50px;background:#8cd1db;border:2px solid #a2a2a2;box-sizing:border-box;"></div>
<div class="t" style="top:75.91px;font-size:29.61px;line-height:29.61px;color:#252525;-webkit-text-stroke:1.0px #252525;left:29.00px;transform:scaleX(1.0225);transform-origin:0 0;">Accumulated Depreci...</div>
<div class="r" style="left:13.70px;top:124.94px;width:356.30px;height:54.50px;background:#8cd1db;border:2px solid #a2a2a2;box-sizing:border-box;"></div>
<div class="t" style="top:137.68px;font-size:29.61px;line-height:29.61px;color:#252525;-webkit-text-stroke:1.0px #252525;left:29.00px;transform:scaleX(1.0151);transform-origin:0 0;">Advertising Expense</div>
<div class="r" style="left:13.70px;top:186.71px;width:356.30px;height:54.50px;background:#8cd1db;border:2px solid #a2a2a2;box-sizing:border-box;"></div>
<div class="t" style="top:199.45px;font-size:29.61px;line-height:29.61px;color:#252525;-webkit-text-stroke:1.0px #252525;left:29.00px;transform:scaleX(0.9453);transform-origin:0 0;">Assets</div>
<div class="r" style="left:13.70px;top:248.48px;width:356.30px;height:54.50px;background:#8cd1db;border:2px solid #a2a2a2;box-sizing:border-box;"></div>
<div class="t" style="top:261.22px;font-size:29.61px;line-height:29.61px;color:#252525;-webkit-text-stroke:1.0px #252525;left:29.00px;transform:scaleX(0.9882);transform-origin:0 0;">Bad Debt Expense</div>
<div class="r" style="left:13.70px;top:310.25px;width:356.30px;height:54.50px;background:#8cd1db;border:2px solid #a2a2a2;box-sizing:border-box;"></div>
<div class="t" style="top:322.99px;font-size:29.61px;line-height:29.61px;color:#252525;-webkit-text-stroke:1.0px #252525;left:29.00px;transform:scaleX(0.9114);transform-origin:0 0;">Cash</div>
<div class="r" style="left:13.70px;top:372.02px;width:356.30px;height:54.50px;background:#8cd1db;border:2px solid #a2a2a2;box-sizing:border-box;"></div>
<div class="t" style="top:384.76px;font-size:29.61px;line-height:29.61px;color:#252525;-webkit-text-stroke:1.0px #252525;left:29.00px;transform:scaleX(1.0158);transform-origin:0 0;">Common Stock</div>
<div class="r" style="left:13.70px;top:433.79px;width:356.30px;height:54.50px;background:#8cd1db;border:2px solid #a2a2a2;box-sizing:border-box;"></div>
<div class="t" style="top:446.53px;font-size:29.61px;line-height:29.61px;color:#252525;-webkit-text-stroke:1.0px #252525;left:29.00px;transform:scaleX(1.0068);transform-origin:0 0;">Cost of Goods Sold</div>
<div class="r" style="left:13.70px;top:495.56px;width:356.30px;height:54.50px;background:#8cd1db;border:2px solid #a2a2a2;box-sizing:border-box;"></div>
<div class="t" style="top:508.30px;font-size:29.61px;line-height:29.61px;color:#252525;-webkit-text-stroke:1.0px #252525;left:29.00px;transform:scaleX(1.0229);transform-origin:0 0;">Credit Cards</div>
</div>
<div class="r" style="left:3006.00px;top:1434.00px;width:31.50px;height:503.60px;background:#e8e8e8;"></div>
<div class="r" style="left:3005.50px;top:1433.50px;width:32.50px;height:32.50px;background:#ffffff;border:2px solid #c4c7cb;box-sizing:border-box;"></div>
<svg class="r" style="left:3014.00px;top:1443.00px;" width="16" height="10" viewBox="0 0 16 10"><polygon points="8,0 16,10 0,10" fill="#777"/></svg>
<div class="r" style="left:3005.50px;top:1467.50px;width:32.50px;height:90.00px;background:#ffffff;border:2px solid #c4c7cb;box-sizing:border-box;"></div>
<div class="r" style="left:3005.50px;top:1905.00px;width:32.50px;height:33.00px;background:#ffffff;border:2px solid #c4c7cb;box-sizing:border-box;"></div>
<svg class="r" style="left:3014.00px;top:1917.00px;" width="16" height="10" viewBox="0 0 16 10"><polygon points="0,0 16,0 8,10" fill="#777"/></svg>
<div class="r" style="left:3688.00px;top:353.00px;width:28.00px;height:1693.00px;background:#e8e8e8;"></div>
<svg class="r" style="left:3691.00px;top:363.00px;" width="20" height="14" viewBox="0 0 20 14"><polygon points="10,1 19,13 1,13" fill="#8a8a8a" stroke="#8a8a8a" stroke-width="2" stroke-linejoin="round"/></svg>
<div class="r" style="left:3693.70px;top:393.00px;width:15.00px;height:592.00px;background:#8a8a8a;border-radius:7.5px;"></div>
<svg class="r" style="left:3692.00px;top:2021.00px;" width="20" height="15" viewBox="0 0 20 15"><polygon points="1,1 19,1 10,14" fill="#8a8a8a" stroke="#8a8a8a" stroke-width="2" stroke-linejoin="round"/></svg>
<div class="r" style="left:0.00px;top:2046.00px;width:3716.00px;height:26.50px;background:#e6e6e6;"></div>
<svg class="r" style="left:6.50px;top:2050.00px;" width="15" height="19" viewBox="0 0 15 19"><polygon points="14,1 14,18 1,9.5" fill="#8a8a8a" stroke="#8a8a8a" stroke-width="2" stroke-linejoin="round"/></svg>
<div class="r" style="left:37.00px;top:2051.80px;width:1355.00px;height:15.20px;background:#8a8a8a;border-radius:7.5px;"></div>
<svg class="r" style="left:3663.00px;top:2050.00px;" width="15" height="19" viewBox="0 0 15 19"><polygon points="1,1 1,18 14,9.5" fill="#8a8a8a" stroke="#8a8a8a" stroke-width="2" stroke-linejoin="round"/></svg>
<div class="r" style="left:0.00px;top:2072.50px;width:3716.00px;height:72.50px;background:#f5f5f5;"></div>
<div class="r" style="left:0.00px;top:2145.00px;width:3715.00px;height:2.20px;background:#dcdcdc;"></div>
<svg class="r" style="left:24.00px;top:2097.00px;" width="18" height="22" viewBox="0 0 18 22"><polyline points="16,2 3,11 16,20" fill="none" stroke="#b0b0b0" stroke-width="2"/></svg>
<svg class="r" style="left:96.00px;top:2097.00px;" width="18" height="22" viewBox="0 0 18 22"><polyline points="2,2 15,11 2,20" fill="none" stroke="#b0b0b0" stroke-width="2"/></svg>
<svg class="r" style="left:164.00px;top:2098.00px;" width="28" height="20" viewBox="0 0 28 20"><path d="M1 1.5 H27 M1 10 H27 M1 18.5 H27" stroke="#242424" stroke-width="2.4"/></svg>
<div class="t" style="top:2091.06px;font-size:31.70px;line-height:31.70px;color:#424242;left:233.50px;transform:scaleX(0.8982);transform-origin:0 0;">Trial Balance (LCY)</div>
<div class="r" style="left:233.00px;top:2139.00px;width:250.00px;height:5.50px;background:#3a7d44;"></div>
<div class="t" style="top:2091.06px;font-size:31.70px;line-height:31.70px;color:#424242;left:524.40px;transform:scaleX(0.9091);transform-origin:0 0;">Trial Balance (ACY)</div>
<div class="t" style="top:2091.06px;font-size:31.70px;line-height:31.70px;color:#424242;left:820.20px;transform:scaleX(0.9338);transform-origin:0 0;">TrialBalanceData</div>
<svg class="r" style="left:1088.00px;top:2092.00px;" width="27" height="27" viewBox="0 0 27 27"><path d="M13.5 1 V26 M1 13.5 H26" stroke="#242424" stroke-width="2.4"/></svg>
</body></html>
